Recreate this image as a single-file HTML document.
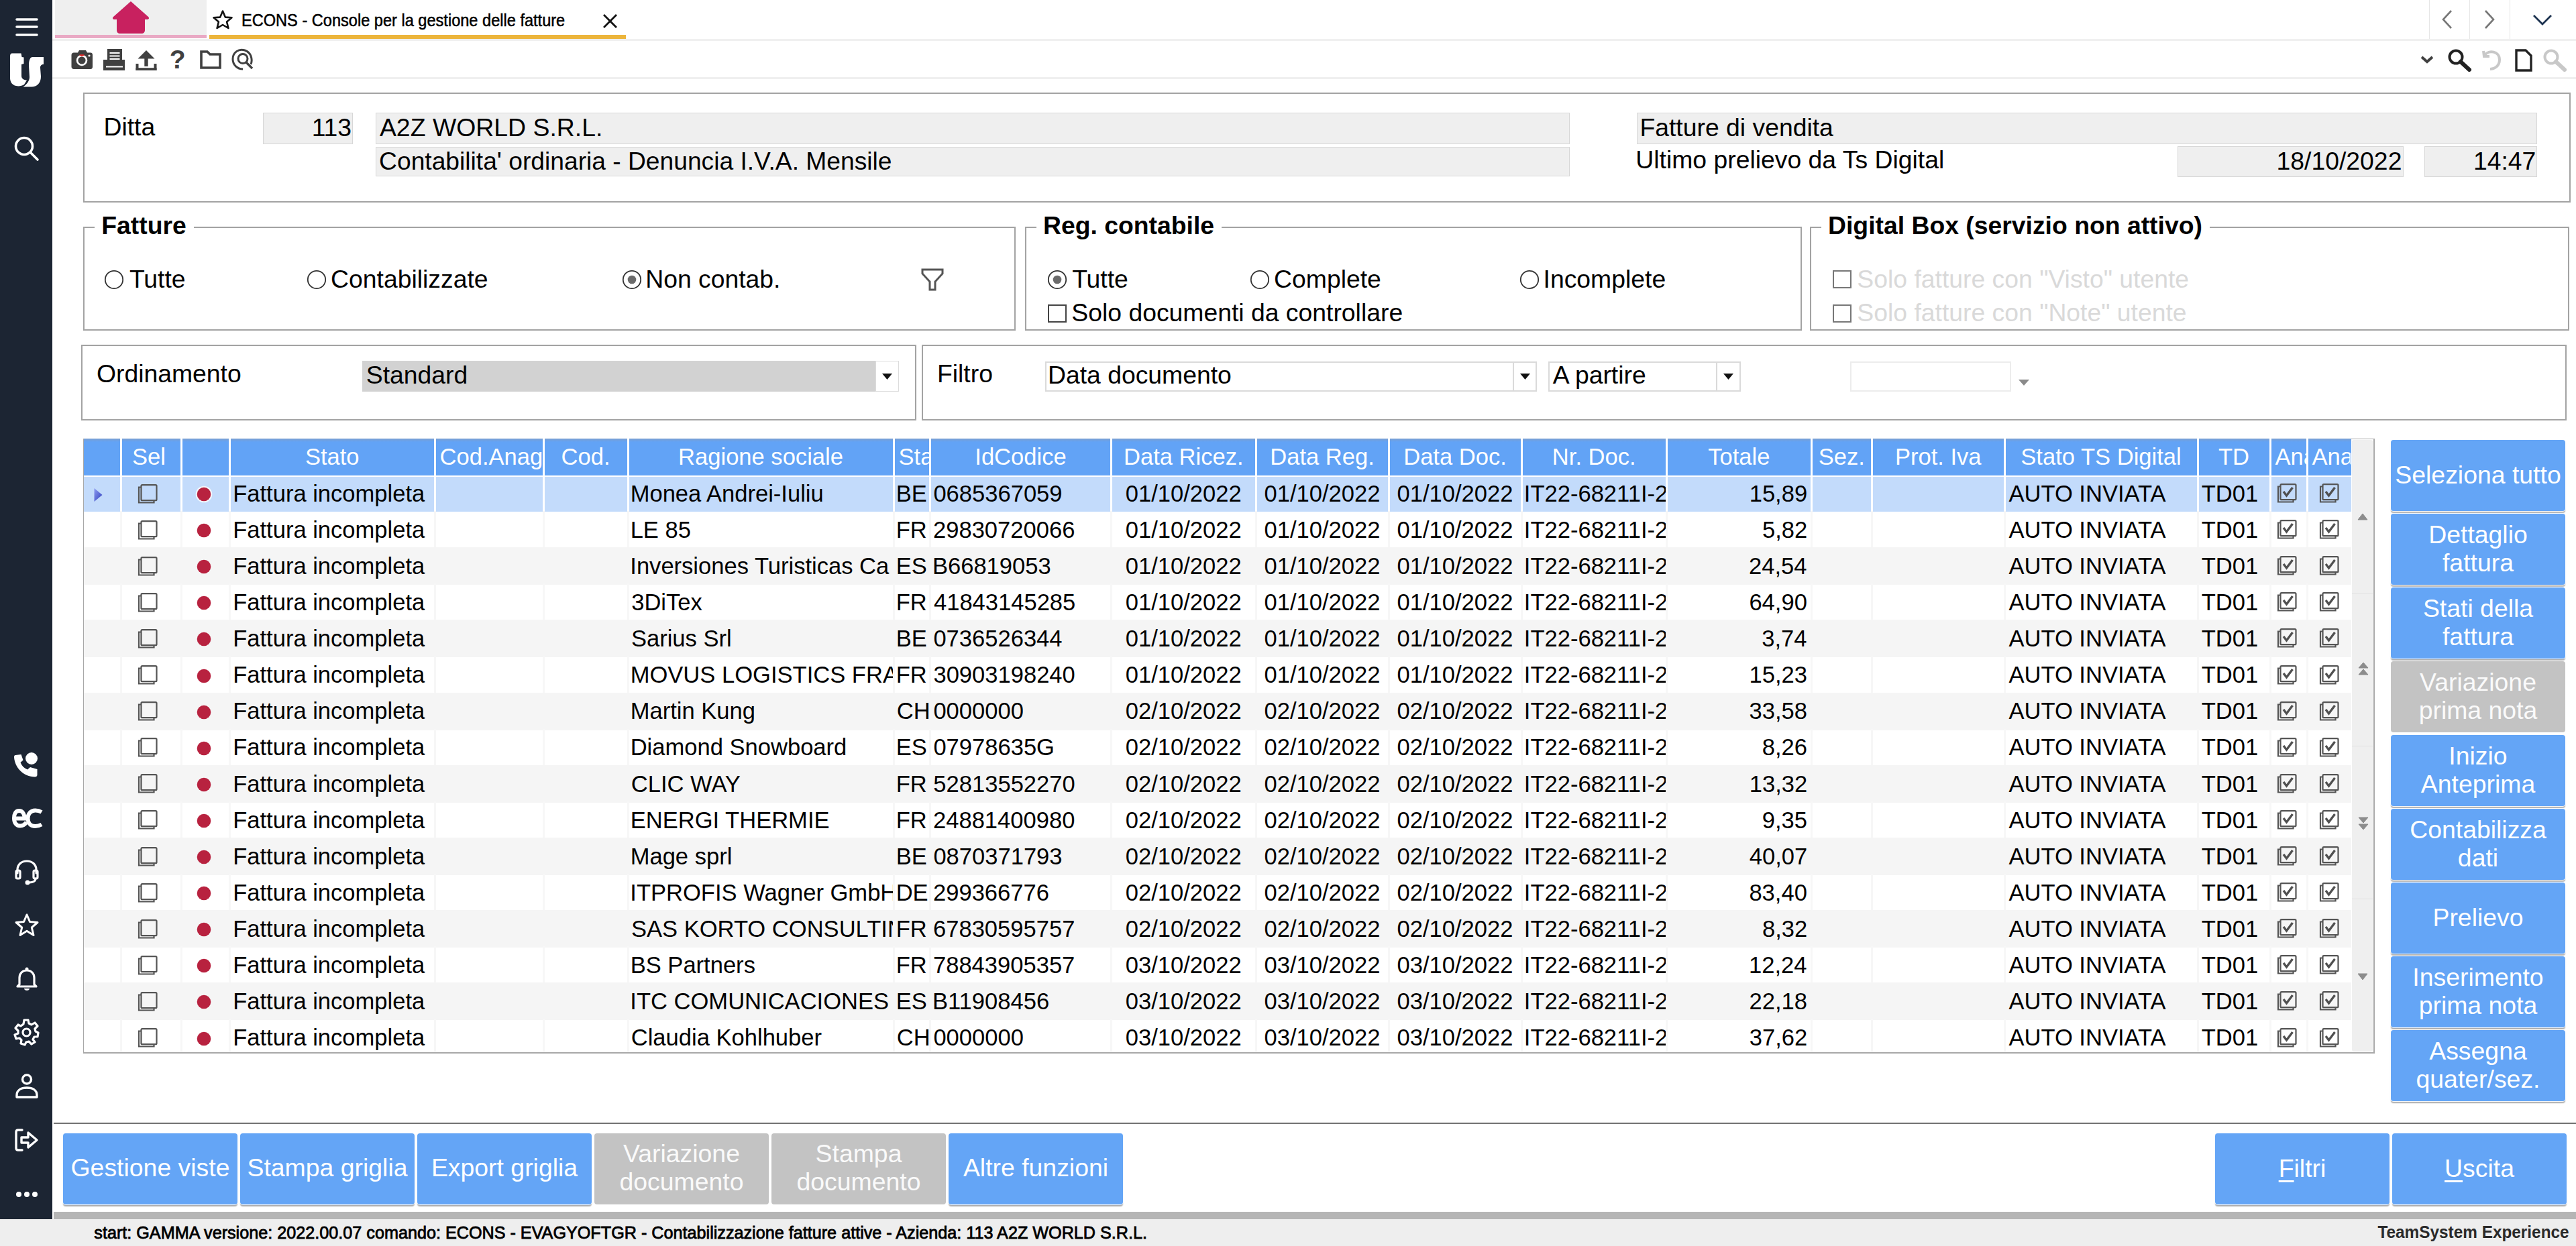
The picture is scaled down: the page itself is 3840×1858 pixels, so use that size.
<!DOCTYPE html><html><head><meta charset="utf-8"><title>ECONS</title><style>
*{margin:0;padding:0;box-sizing:border-box}
html,body{width:3840px;height:1858px;overflow:hidden;background:#fff;font-family:"Liberation Sans",sans-serif;color:#000}
.a{position:absolute}
.t{white-space:nowrap}
</style></head><body>
<div class="a" style="left:0px;top:0px;width:78px;height:1818px;background:#1c2533"></div>
<svg class="a" style="left:22px;top:24px;" width="36" height="34" viewBox="0 0 36 34"><g stroke="#fff" stroke-width="3.6" stroke-linecap="round"><line x1="3" y1="5" x2="33" y2="5"/><line x1="3" y1="16" x2="33" y2="16"/><line x1="3" y1="28" x2="33" y2="28"/></g></svg>
<svg class="a" style="left:0px;top:60px;" width="80" height="80" viewBox="0 0 80 80"><g fill="#fff"><path d="M18 19.5 L31.5 19.5 L32.5 25 L35.5 25.5 L35.5 35 L32 36 L32 53 C32 57 35 59.5 40 59.5 L36 66 C33 68 28 69 24 68 C18 67 15 62 15 56 L15 24 C15 21 16 19.5 18 19.5 Z"/><path d="M48 25 L65 25 L65 36 C62 36 60 37.5 60 41 L61 54 C61 64 55 69.5 47 69.5 L34.5 69.5 C40.5 65.5 44 60 44 55 L43 38 C43 30 44.5 26 48 25 Z"/></g></svg>
<svg class="a" style="left:20px;top:202px;" width="40" height="40" viewBox="0 0 40 40"><g stroke="#fff" stroke-width="3.6" fill="none" stroke-linecap="round"><circle cx="16" cy="16" r="12.5"/><line x1="25.5" y1="25.5" x2="36" y2="36"/></g></svg>
<svg class="a" style="left:20px;top:1120px;" width="40" height="40" viewBox="0 0 40 40"><g fill="#fff"><path d="M3 6 L11.5 5 L14.5 13.5 L10.5 17 C12.5 22 16 25.5 21 27.5 L25 24 L35.5 27 L35.5 35.5 C35.5 37.5 34 38.5 32 38.5 C15 38 2 25 1 9 C1 7 1.8 6.2 3 6 Z"/><circle cx="27" cy="11" r="9"/></g></svg>
<svg class="a" style="left:14px;top:1200px;" width="52" height="40" viewBox="0 0 52 40"><g fill="none" stroke="#fff" stroke-width="6"><path d="M8 20.5 L22.5 20.5 C22.5 13 19 9 14.5 9 C9.5 9 7 13.5 7 20 C7 27 10.5 31.5 16 31.5 C20 31.5 23 29.5 25.5 26"/><path d="M48 11 C45 9.2 42 8.5 38.5 8.5 C31.5 8.5 27.5 14 27.5 20.5 C27.5 27 31.5 32 38.5 32 C42 32 45 31.2 48 29.5"/></g></svg>
<svg class="a" style="left:20px;top:1280px;" width="40" height="40" viewBox="0 0 40 40"><g fill="none" stroke="#fff" stroke-width="3.2" stroke-linecap="round"><path d="M6 22 L6 17 C6 9 12 4 20 4 C28 4 34 9 34 17 L34 22"/><rect x="4" y="18" width="6" height="12" rx="2"/><rect x="30" y="18" width="6" height="12" rx="2"/><path d="M33 30 C33 34 29 36 24 36"/></g><circle cx="21" cy="36" r="3.5" fill="#fff"/></svg>
<svg class="a" style="left:20px;top:1360px;" width="40" height="40" viewBox="0 0 40 40"><path d="M20 4 L24.5 14.5 L36 15.5 L27.3 23 L30 34.5 L20 28.3 L10 34.5 L12.7 23 L4 15.5 L15.5 14.5 Z" fill="none" stroke="#fff" stroke-width="3" stroke-linejoin="round"/></svg>
<svg class="a" style="left:20px;top:1439px;" width="40" height="42" viewBox="0 0 40 42"><g fill="none" stroke="#fff" stroke-width="3.2" stroke-linejoin="round"><path d="M9 29 L9 19 C9 12 14 8 20 8 C26 8 31 12 31 19 L31 29 L34 32 L6 32 Z"/></g><circle cx="20" cy="6" r="2.5" fill="#fff"/><path d="M16 35 C16 39 24 39 24 35 Z" fill="#fff"/></svg>
<svg class="a" style="left:19px;top:1519px;" width="42" height="42" viewBox="0 0 42 42"><g fill="none" stroke="#fff" stroke-width="3.2" stroke-linejoin="round"><path d="M17 4 L23 4 L24 9 L28 11 L33 8 L37 13 L33 17 L34 21 L38 23 L37 29 L32 29 L30 33 L33 37 L28 40 L24 36 L20 37 L18 41 L12 39 L13 34 L10 31 L5 32 L3 26 L8 24 L8 20 L4 16 L8 11 L12 13 L16 10 Z" transform="translate(0,-2)"/><circle cx="20.5" cy="20.5" r="5.5"/></g></svg>
<svg class="a" style="left:20px;top:1600px;" width="40" height="40" viewBox="0 0 40 40"><g fill="none" stroke="#fff" stroke-width="3.4"><circle cx="20" cy="9.5" r="6.5"/><path d="M5 36 L5 33 C5 26 11 22 20 22 C29 22 35 26 35 33 L35 36 Z" stroke-linejoin="round"/></g></svg>
<svg class="a" style="left:20px;top:1680px;" width="40" height="40" viewBox="0 0 40 40"><g fill="none" stroke="#fff" stroke-width="3.4" stroke-linejoin="round" stroke-linecap="round"><path d="M13 5 L7 5 C5 5 4 6 4 8 L4 32 C4 34 5 35 7 35 L13 35"/><path d="M12 16 L22 16 L22 9 L35 20 L22 31 L22 24 L12 24 Z"/></g></svg>
<svg class="a" style="left:22px;top:1773px;" width="36" height="16" viewBox="0 0 36 16"><g fill="#fff"><circle cx="6" cy="8" r="4"/><circle cx="18" cy="8" r="4"/><circle cx="30" cy="8" r="4"/></g></svg>
<div class="a" style="left:78px;top:58px;width:3762px;height:3px;background:#f0f0f0"></div>
<div class="a" style="left:82px;top:0px;width:226px;height:57px;background:#efefef"></div>
<div class="a" style="left:82px;top:52px;width:226px;height:5px;background:#e9a9c4"></div>
<svg class="a" style="left:166px;top:0px;" width="58" height="52" viewBox="0 0 58 52"><path d="M29 2 L55 25 C57 27 56 29 53 29 L50 29 L50 45 C50 48 48 50 45 50 L13 50 C10 50 8 48 8 45 L8 29 L5 29 C2 29 1 27 3 25 Z" fill="#c8215f"/></svg>
<div class="a" style="left:312px;top:0px;width:621px;height:57px;background:#fff"></div>
<div class="a" style="left:312px;top:52px;width:621px;height:6px;background:#ecb53c"></div>
<svg class="a" style="left:316px;top:14px;" width="32" height="32" viewBox="0 0 32 32"><path d="M16 2.5 L19.8 11.6 L29.5 12.3 L22.1 18.6 L24.4 28 L16 23 L7.6 28 L9.9 18.6 L2.5 12.3 L12.2 11.6 Z" fill="none" stroke="#111" stroke-width="2.6" stroke-linejoin="round"/></svg>
<div class="a t " style="left:360.45px;top:17.64px;font-size:25px;line-height:25px;transform:scaleX(0.943);transform-origin:0 0;-webkit-text-stroke:0.5px #000;color:#000">ECONS - Console per la gestione delle fatture</div>
<svg class="a" style="left:898px;top:21px;" width="24" height="22" viewBox="0 0 24 22"><g stroke="#111" stroke-width="2.8" stroke-linecap="square"><line x1="3" y1="2" x2="20" y2="19"/><line x1="20" y1="2" x2="3" y2="19"/></g></svg>
<div class="a" style="left:3621px;top:0px;width:1px;height:58px;background:#e6e6e6"></div>
<div class="a" style="left:3681px;top:0px;width:1px;height:58px;background:#e6e6e6"></div>
<div class="a" style="left:3741px;top:0px;width:1px;height:58px;background:#e6e6e6"></div>
<svg class="a" style="left:3636px;top:14px;" width="24" height="32" viewBox="0 0 24 32"><polyline points="18,2 6,15 18,28" fill="none" stroke="#777" stroke-width="2.6"/></svg>
<svg class="a" style="left:3700px;top:14px;" width="24" height="32" viewBox="0 0 24 32"><polyline points="5,2 17,15 5,28" fill="none" stroke="#777" stroke-width="2.6"/></svg>
<svg class="a" style="left:3774px;top:20px;" width="34" height="20" viewBox="0 0 34 20"><polyline points="3,3 16,16 29,3" fill="none" stroke="#1d3350" stroke-width="2.8"/></svg>
<div class="a" style="left:78px;top:115px;width:3762px;height:3px;background:#efefef"></div>
<svg class="a" style="left:104px;top:72px;" width="36" height="34" viewBox="0 0 36 34"><path d="M2.5 10 C2.5 8 4 6.5 6 6.5 L12 6.5 L14 3 L24 3 L26 6.5 L31 6.5 C33 6.5 34 8 34 10 L34 27.5 C34 29.5 33 31 31 31 L6 31 C4 31 2.5 29.5 2.5 27.5 Z" fill="#404040"/><circle cx="18" cy="18" r="8.3" fill="#fff"/><circle cx="18" cy="18" r="5.6" fill="#404040"/><path d="M14 10.5 L18 12 L22 10.5 L21 9.3 L15 9.3 Z" fill="#d22"/><circle cx="29" cy="11" r="1.6" fill="#fff"/></svg>
<svg class="a" style="left:152px;top:72px;" width="36" height="34" viewBox="0 0 36 34"><g fill="#404040"><rect x="8" y="1" width="22" height="22"/><rect x="2" y="17" width="32" height="16"/></g><g fill="#fff"><rect x="11.5" y="6" width="15" height="2"/><rect x="11.5" y="10.5" width="15" height="2"/><rect x="11.5" y="15" width="15" height="2"/><rect x="11.5" y="3.5" width="15" height="14" fill="none" stroke="#fff" stroke-width="0"/><rect x="6" y="26.5" width="25" height="2"/></g></svg>
<svg class="a" style="left:200px;top:72px;" width="36" height="34" viewBox="0 0 36 34"><g fill="#404040"><path d="M18 3 L30.5 15.5 L20.7 15.5 L20.7 27 L15.3 27 L15.3 15.5 L5.5 15.5 Z"/><rect x="2.5" y="23" width="4" height="10"/><rect x="29.5" y="23" width="4" height="10"/><rect x="2.5" y="29.2" width="31" height="3.8"/></g></svg>
<div class="a t " style="left:252.71px;top:68.99px;font-size:39px;line-height:39px;font-weight:bold;color:#404040;">?</div>
<svg class="a" style="left:296px;top:72px;" width="36" height="34" viewBox="0 0 36 34"><path d="M4 5 L13 5 L17 9 L32 9 L32 29 L4 29 Z" fill="none" stroke="#404040" stroke-width="3.6" stroke-linejoin="miter"/></svg>
<svg class="a" style="left:344px;top:72px;" width="36" height="34" viewBox="0 0 36 34"><g fill="none" stroke="#404040" stroke-width="3"><path d="M30 24 C33 16 30 6 21 3 C12 0 3 6 3 16 C3 25 10 31 18 31"/><circle cx="18" cy="15.5" r="7"/><line x1="23" y1="21" x2="32" y2="30" stroke-width="3.4"/></g></svg>
<svg class="a" style="left:3606px;top:80px;" width="24" height="18" viewBox="0 0 24 18"><polyline points="4,5 12,12 20,5" fill="none" stroke="#404040" stroke-width="4"/></svg>
<svg class="a" style="left:3648px;top:72px;" width="38" height="36" viewBox="0 0 38 36"><g stroke="#222" fill="none"><circle cx="13" cy="13" r="9.5" stroke-width="4"/><line x1="20" y1="20" x2="33" y2="32" stroke-width="6" stroke-linecap="round"/></g></svg>
<svg class="a" style="left:3698px;top:72px;" width="36" height="36" viewBox="0 0 36 36"><g fill="none" stroke="#c8c8c8" stroke-width="4"><path d="M6 10 C12 2 28 4 28 17 C28 27 20 31 14 31"/><polyline points="4,4 5,12 13,12"/></g></svg>
<svg class="a" style="left:3748px;top:72px;" width="28" height="36" viewBox="0 0 28 36"><path d="M3 3 L17 3 L25 11 L25 33 L3 33 Z" fill="none" stroke="#222" stroke-width="3.4"/></svg>
<svg class="a" style="left:3790px;top:72px;" width="38" height="36" viewBox="0 0 38 36"><g stroke="#c8c8c8" fill="none"><circle cx="13" cy="13" r="9.5" stroke-width="4"/><line x1="20" y1="20" x2="33" y2="32" stroke-width="6" stroke-linecap="round"/></g></svg>
<div class="a" style="left:124px;top:138px;width:3708px;height:164px;border:2px solid #a3a3a3"></div>
<div class="a t " style="left:154.44px;top:170.88px;font-size:37.35px;line-height:37.35px;">Ditta</div>
<div class="a" style="left:392px;top:168px;width:134px;height:47px;background:#efefef;border:1px solid #d7d7d7"></div>
<div class="a t" style="right:3315.86px;top:171.88px;font-size:37.35px;line-height:37.35px;text-align:right;">113</div>
<div class="a" style="left:560px;top:168px;width:1780px;height:47px;background:#efefef;border:1px solid #d7d7d7"></div>
<div class="a t " style="left:565.93px;top:172.14px;font-size:37.4px;line-height:37.4px;">A2Z WORLD S.R.L.</div>
<div class="a" style="left:560px;top:219px;width:1780px;height:44px;background:#efefef;border:1px solid #d7d7d7"></div>
<div class="a t " style="left:565.11px;top:222.31px;font-size:37.2px;line-height:37.2px;">Contabilita&#x27; ordinaria - Denuncia I.V.A. Mensile</div>
<div class="a" style="left:2440px;top:168px;width:1342px;height:47px;background:#efefef;border:1px solid #d7d7d7"></div>
<div class="a t " style="left:2444.44px;top:172.18px;font-size:37.35px;line-height:37.35px;">Fatture di vendita</div>
<div class="a t " style="left:2438.37px;top:219.68px;font-size:37.35px;line-height:37.35px;">Ultimo prelievo da Ts Digital</div>
<div class="a" style="left:3246px;top:218px;width:337px;height:46px;background:#efefef;border:1px solid #d7d7d7"></div>
<div class="a t" style="right:259.62px;top:222.18px;font-size:37.35px;line-height:37.35px;text-align:right;">18/10/2022</div>
<div class="a" style="left:3614px;top:218px;width:168px;height:46px;background:#efefef;border:1px solid #d7d7d7"></div>
<div class="a t" style="right:59.62px;top:222.18px;font-size:37.35px;line-height:37.35px;text-align:right;">14:47</div>
<div class="a" style="left:124px;top:338px;width:2px;height:155px;background:#a3a3a3"></div>
<div class="a" style="left:1512px;top:338px;width:2px;height:155px;background:#a3a3a3"></div>
<div class="a" style="left:124px;top:491px;width:1390px;height:2px;background:#a3a3a3"></div>
<div class="a" style="left:124px;top:338px;width:17px;height:2px;background:#a3a3a3"></div>
<div class="a" style="left:289px;top:338px;width:1225px;height:2px;background:#a3a3a3"></div>
<div class="a" style="left:1528px;top:338px;width:2px;height:155px;background:#a3a3a3"></div>
<div class="a" style="left:2684px;top:338px;width:2px;height:155px;background:#a3a3a3"></div>
<div class="a" style="left:1528px;top:491px;width:1158px;height:2px;background:#a3a3a3"></div>
<div class="a" style="left:1528px;top:338px;width:17px;height:2px;background:#a3a3a3"></div>
<div class="a" style="left:1821px;top:338px;width:865px;height:2px;background:#a3a3a3"></div>
<div class="a" style="left:2698px;top:338px;width:2px;height:155px;background:#a3a3a3"></div>
<div class="a" style="left:3828px;top:338px;width:2px;height:155px;background:#a3a3a3"></div>
<div class="a" style="left:2698px;top:491px;width:1132px;height:2px;background:#a3a3a3"></div>
<div class="a" style="left:2698px;top:338px;width:17px;height:2px;background:#a3a3a3"></div>
<div class="a" style="left:3294px;top:338px;width:536px;height:2px;background:#a3a3a3"></div>
<div class="a t " style="left:151.25px;top:318.38px;font-size:37.35px;line-height:37.35px;font-weight:bold;">Fatture</div>
<div class="a t " style="left:1555.00px;top:318.38px;font-size:37.35px;line-height:37.35px;font-weight:bold;">Reg. contabile</div>
<div class="a t " style="left:2725.00px;top:318.38px;font-size:37.35px;line-height:37.35px;font-weight:bold;">Digital Box (servizio non attivo)</div>
<svg class="a" style="left:155px;top:401.5px;" width="30" height="30" viewBox="0 0 30 30"><circle cx="15" cy="15" r="13.2" fill="#fff" stroke="#333" stroke-width="1.8"/></svg>
<div class="a t " style="left:192.91px;top:398.38px;font-size:37.35px;line-height:37.35px;">Tutte</div>
<svg class="a" style="left:457px;top:401.5px;" width="30" height="30" viewBox="0 0 30 30"><circle cx="15" cy="15" r="13.2" fill="#fff" stroke="#333" stroke-width="1.8"/></svg>
<div class="a t " style="left:493.10px;top:398.38px;font-size:37.35px;line-height:37.35px;">Contabilizzate</div>
<svg class="a" style="left:927px;top:401.5px;" width="30" height="30" viewBox="0 0 30 30"><circle cx="15" cy="15" r="13.2" fill="#fff" stroke="#333" stroke-width="1.8"/><circle cx="15" cy="15" r="6.3" fill="#6b6b6b"/></svg>
<div class="a t " style="left:962.19px;top:398.38px;font-size:37.35px;line-height:37.35px;">Non contab.</div>
<svg class="a" style="left:1372px;top:399px;" width="36" height="36" viewBox="0 0 36 36"><path d="M3 3 L33 3 L33 9 L22 21 L22 33 L14 33 L14 21 L3 9 Z" fill="#fff" stroke="#555" stroke-width="3" stroke-linejoin="miter"/></svg>
<svg class="a" style="left:1561px;top:401.5px;" width="30" height="30" viewBox="0 0 30 30"><circle cx="15" cy="15" r="13.2" fill="#fff" stroke="#333" stroke-width="1.8"/><circle cx="15" cy="15" r="6.3" fill="#6b6b6b"/></svg>
<div class="a t " style="left:1598.16px;top:398.38px;font-size:37.35px;line-height:37.35px;">Tutte</div>
<svg class="a" style="left:1863px;top:401.5px;" width="30" height="30" viewBox="0 0 30 30"><circle cx="15" cy="15" r="13.2" fill="#fff" stroke="#333" stroke-width="1.8"/></svg>
<div class="a t " style="left:1899.10px;top:398.38px;font-size:37.35px;line-height:37.35px;">Complete</div>
<svg class="a" style="left:2265px;top:401.5px;" width="30" height="30" viewBox="0 0 30 30"><circle cx="15" cy="15" r="13.2" fill="#fff" stroke="#333" stroke-width="1.8"/></svg>
<div class="a t " style="left:2300.55px;top:398.38px;font-size:37.35px;line-height:37.35px;">Incomplete</div>
<div class="a" style="left:1562px;top:454px;width:28px;height:27px;border:2px solid #444;background:#fff"></div>
<div class="a t " style="left:1597.30px;top:447.88px;font-size:37.35px;line-height:37.35px;">Solo documenti da controllare</div>
<div class="a" style="left:2732px;top:403px;width:28px;height:27px;border:2px solid #777;background:#fff"></div>
<div class="a t " style="left:2768.30px;top:398.38px;font-size:37.35px;line-height:37.35px;color:#d9d9d9;">Solo fatture con &quot;Visto&quot; utente</div>
<div class="a" style="left:2732px;top:454px;width:28px;height:27px;border:2px solid #777;background:#fff"></div>
<div class="a t " style="left:2768.30px;top:447.88px;font-size:37.35px;line-height:37.35px;color:#d9d9d9;">Solo fatture con &quot;Note&quot; utente</div>
<div class="a" style="left:121px;top:514px;width:1245px;height:113px;border:2px solid #a3a3a3"></div>
<div class="a" style="left:1374px;top:514px;width:2452px;height:113px;border:2px solid #a3a3a3"></div>
<div class="a t " style="left:143.98px;top:539.38px;font-size:37.35px;line-height:37.35px;">Ordinamento</div>
<div class="a" style="left:540px;top:538px;width:765px;height:46px;background:#d2d2d2"></div>
<div class="a" style="left:1305px;top:538px;width:35px;height:46px;background:#fff;border:1px solid #dcdcdc"></div>
<svg class="a" style="left:1315px;top:557px;" width="15" height="9" viewBox="0 0 15 9"><path d="M0 0 L15 0 L7.5 9 Z" fill="#111"/></svg>
<div class="a t " style="left:545.80px;top:540.88px;font-size:37.35px;line-height:37.35px;">Standard</div>
<div class="a t " style="left:1396.94px;top:539.38px;font-size:37.35px;line-height:37.35px;">Filtro</div>
<div class="a" style="left:1558px;top:539px;width:733px;height:45px;background:#fff;border:2px solid #dadada"></div>
<div class="a" style="left:2255px;top:539px;width:2px;height:45px;background:#dadada"></div>
<svg class="a" style="left:2266px;top:557px;" width="15" height="9" viewBox="0 0 15 9"><path d="M0 0 L15 0 L7.5 9 Z" fill="#111"/></svg>
<div class="a t " style="left:1561.94px;top:540.88px;font-size:37.35px;line-height:37.35px;">Data documento</div>
<div class="a" style="left:2308px;top:539px;width:287px;height:45px;background:#fff;border:2px solid #dadada"></div>
<div class="a" style="left:2558px;top:539px;width:2px;height:45px;background:#dadada"></div>
<svg class="a" style="left:2569px;top:557px;" width="15" height="9" viewBox="0 0 15 9"><path d="M0 0 L15 0 L7.5 9 Z" fill="#111"/></svg>
<div class="a t " style="left:2314.68px;top:540.88px;font-size:37.35px;line-height:37.35px;">A partire</div>
<div class="a" style="left:2758px;top:539px;width:240px;height:45px;background:#fff;border:2px solid #ececec"></div>
<svg class="a" style="left:3009px;top:566px;" width="16" height="9" viewBox="0 0 16 9"><path d="M0 0 L16 0 L8 9 Z" fill="#8a8a8a"/></svg>
<div class="a" style="left:125px;top:654px;width:3380px;height:55px;background:linear-gradient(#7b9fcf 0px,#62a3f6 5px,#62a3f6 100%)"></div>
<div class="a" style="left:178.5px;top:654px;width:3.0px;height:55px;background:#fff"></div>
<div class="a" style="left:268.5px;top:654px;width:3.0px;height:55px;background:#fff"></div>
<div class="a" style="left:341.0px;top:654px;width:3.0px;height:55px;background:#fff"></div>
<div class="a" style="left:646.5px;top:654px;width:3.0px;height:55px;background:#fff"></div>
<div class="a" style="left:808.5px;top:654px;width:3.0px;height:55px;background:#fff"></div>
<div class="a" style="left:934.5px;top:654px;width:3.0px;height:55px;background:#fff"></div>
<div class="a" style="left:1330.5px;top:654px;width:3.0px;height:55px;background:#fff"></div>
<div class="a" style="left:1385.0px;top:654px;width:3.0px;height:55px;background:#fff"></div>
<div class="a" style="left:1655.0px;top:654px;width:3.0px;height:55px;background:#fff"></div>
<div class="a" style="left:1870.5px;top:654px;width:3.0px;height:55px;background:#fff"></div>
<div class="a" style="left:2068.5px;top:654px;width:3.0px;height:55px;background:#fff"></div>
<div class="a" style="left:2266.5px;top:654px;width:3.0px;height:55px;background:#fff"></div>
<div class="a" style="left:2483.0px;top:654px;width:3.0px;height:55px;background:#fff"></div>
<div class="a" style="left:2698.5px;top:654px;width:3.0px;height:55px;background:#fff"></div>
<div class="a" style="left:2789.0px;top:654px;width:3.0px;height:55px;background:#fff"></div>
<div class="a" style="left:2986.5px;top:654px;width:3.0px;height:55px;background:#fff"></div>
<div class="a" style="left:3274.5px;top:654px;width:3.0px;height:55px;background:#fff"></div>
<div class="a" style="left:3382.5px;top:654px;width:3.0px;height:55px;background:#fff"></div>
<div class="a" style="left:3437.5px;top:654px;width:3.0px;height:55px;background:#fff"></div>
<div class="a" style="left:125px;top:709px;width:3380px;height:2px;background:#fff"></div>
<div class="a" style="left:178.5px;top:654px;width:87px;height:55px;overflow:hidden"><div class="a t" style="left:0;top:10.05px;width:87px;text-align:center;font-size:34.55px;line-height:34.55px;color:#fff">Sel</div></div>
<div class="a" style="left:344.0px;top:654px;width:302.5px;height:55px;overflow:hidden"><div class="a t" style="left:0;top:10.05px;width:302.5px;text-align:center;font-size:34.55px;line-height:34.55px;color:#fff">Stato</div></div>
<div class="a" style="left:649.5px;top:654px;width:159px;height:55px;overflow:hidden"><div class="a t" style="left:0;top:10.05px;width:400px;padding-left:6px;text-align:left;font-size:34.55px;line-height:34.55px;color:#fff">Cod.Anag</div></div>
<div class="a" style="left:811.5px;top:654px;width:123px;height:55px;overflow:hidden"><div class="a t" style="left:0;top:10.05px;width:123px;text-align:center;font-size:34.55px;line-height:34.55px;color:#fff">Cod.</div></div>
<div class="a" style="left:937.5px;top:654px;width:393px;height:55px;overflow:hidden"><div class="a t" style="left:0;top:10.05px;width:393px;text-align:center;font-size:34.55px;line-height:34.55px;color:#fff">Ragione sociale</div></div>
<div class="a" style="left:1333.5px;top:654px;width:51.5px;height:55px;overflow:hidden"><div class="a t" style="left:0;top:10.05px;width:400px;padding-left:6px;text-align:left;font-size:34.55px;line-height:34.55px;color:#fff">Stato</div></div>
<div class="a" style="left:1388.0px;top:654px;width:267.0px;height:55px;overflow:hidden"><div class="a t" style="left:0;top:10.05px;width:267.0px;text-align:center;font-size:34.55px;line-height:34.55px;color:#fff">IdCodice</div></div>
<div class="a" style="left:1658.0px;top:654px;width:212.5px;height:55px;overflow:hidden"><div class="a t" style="left:0;top:10.05px;width:212.5px;text-align:center;font-size:34.55px;line-height:34.55px;color:#fff">Data Ricez.</div></div>
<div class="a" style="left:1873.5px;top:654px;width:195px;height:55px;overflow:hidden"><div class="a t" style="left:0;top:10.05px;width:195px;text-align:center;font-size:34.55px;line-height:34.55px;color:#fff">Data Reg.</div></div>
<div class="a" style="left:2071.5px;top:654px;width:195px;height:55px;overflow:hidden"><div class="a t" style="left:0;top:10.05px;width:195px;text-align:center;font-size:34.55px;line-height:34.55px;color:#fff">Data Doc.</div></div>
<div class="a" style="left:2269.5px;top:654px;width:213.5px;height:55px;overflow:hidden"><div class="a t" style="left:0;top:10.05px;width:213.5px;text-align:center;font-size:34.55px;line-height:34.55px;color:#fff">Nr. Doc.</div></div>
<div class="a" style="left:2486.0px;top:654px;width:212.5px;height:55px;overflow:hidden"><div class="a t" style="left:0;top:10.05px;width:212.5px;text-align:center;font-size:34.55px;line-height:34.55px;color:#fff">Totale</div></div>
<div class="a" style="left:2701.5px;top:654px;width:87.5px;height:55px;overflow:hidden"><div class="a t" style="left:0;top:10.05px;width:87.5px;text-align:center;font-size:34.55px;line-height:34.55px;color:#fff">Sez.</div></div>
<div class="a" style="left:2792.0px;top:654px;width:194.5px;height:55px;overflow:hidden"><div class="a t" style="left:0;top:10.05px;width:194.5px;text-align:center;font-size:34.55px;line-height:34.55px;color:#fff">Prot. Iva</div></div>
<div class="a" style="left:2989.5px;top:654px;width:285px;height:55px;overflow:hidden"><div class="a t" style="left:0;top:10.05px;width:285px;text-align:center;font-size:34.55px;line-height:34.55px;color:#fff">Stato TS Digital</div></div>
<div class="a" style="left:3277.5px;top:654px;width:105px;height:55px;overflow:hidden"><div class="a t" style="left:0;top:10.05px;width:105px;text-align:center;font-size:34.55px;line-height:34.55px;color:#fff">TD</div></div>
<div class="a" style="left:3385.5px;top:654px;width:52px;height:55px;overflow:hidden"><div class="a t" style="left:0;top:10.05px;width:400px;padding-left:6px;text-align:left;font-size:34.55px;line-height:34.55px;color:#fff">Ana</div></div>
<div class="a" style="left:3440.5px;top:654px;width:63px;height:55px;overflow:hidden"><div class="a t" style="left:0;top:10.05px;width:400px;padding-left:6px;text-align:left;font-size:34.55px;line-height:34.55px;color:#fff">Ana</div></div>
<div class="a" style="left:0;top:0;width:3840px;height:1569px;overflow:hidden">
<div class="a" style="left:125px;top:711.0px;width:3380px;height:51.5px;background:#c3dbfb"></div>
<div class="a" style="left:178.5px;top:710.0px;width:3.0px;height:54.10000000000002px;background:#fff"></div>
<div class="a" style="left:268.5px;top:710.0px;width:3.0px;height:54.10000000000002px;background:#fff"></div>
<div class="a" style="left:341.0px;top:710.0px;width:3.0px;height:54.10000000000002px;background:#fff"></div>
<div class="a" style="left:646.5px;top:710.0px;width:3.0px;height:54.10000000000002px;background:#fff"></div>
<div class="a" style="left:808.5px;top:710.0px;width:3.0px;height:54.10000000000002px;background:#fff"></div>
<div class="a" style="left:934.5px;top:710.0px;width:3.0px;height:54.10000000000002px;background:#fff"></div>
<div class="a" style="left:1330.5px;top:710.0px;width:3.0px;height:54.10000000000002px;background:#fff"></div>
<div class="a" style="left:1385.0px;top:710.0px;width:3.0px;height:54.10000000000002px;background:#fff"></div>
<div class="a" style="left:1655.0px;top:710.0px;width:3.0px;height:54.10000000000002px;background:#fff"></div>
<div class="a" style="left:1870.5px;top:710.0px;width:3.0px;height:54.10000000000002px;background:#fff"></div>
<div class="a" style="left:2068.5px;top:710.0px;width:3.0px;height:54.10000000000002px;background:#fff"></div>
<div class="a" style="left:2266.5px;top:710.0px;width:3.0px;height:54.10000000000002px;background:#fff"></div>
<div class="a" style="left:2483.0px;top:710.0px;width:3.0px;height:54.10000000000002px;background:#fff"></div>
<div class="a" style="left:2698.5px;top:710.0px;width:3.0px;height:54.10000000000002px;background:#fff"></div>
<div class="a" style="left:2789.0px;top:710.0px;width:3.0px;height:54.10000000000002px;background:#fff"></div>
<div class="a" style="left:2986.5px;top:710.0px;width:3.0px;height:54.10000000000002px;background:#fff"></div>
<div class="a" style="left:3274.5px;top:710.0px;width:3.0px;height:54.10000000000002px;background:#fff"></div>
<div class="a" style="left:3382.5px;top:710.0px;width:3.0px;height:54.10000000000002px;background:#fff"></div>
<div class="a" style="left:3437.5px;top:710.0px;width:3.0px;height:54.10000000000002px;background:#fff"></div>
<svg class="a" style="left:139px;top:727px;" width="15" height="22" viewBox="0 0 15 22"><defs><linearGradient id="ga" x1="0" y1="0" x2="1" y2="1"><stop offset="0" stop-color="#8e9cf0"/><stop offset="1" stop-color="#2f3fbf"/></linearGradient></defs><path d="M1.5 1 L13.5 11 L1.5 21 Z" fill="url(#ga)"/></svg>
<svg class="a" style="left:205px;top:721.5px;" width="30" height="30" viewBox="0 0 30 30"><g fill="none" stroke="#555" stroke-width="2.2"><path d="M5.5 4.5 L2 4.5 L2 27.5 L24.5 27.5 L24.5 24.5"/><rect x="5.5" y="1.2" width="23" height="23" rx="1.5"/></g></svg>
<svg class="a" style="left:291px;top:724.0px;" width="26" height="26" viewBox="0 0 26 26"><circle cx="13" cy="13" r="12.3" fill="#fff" opacity="0.8"/><circle cx="13" cy="13" r="10.3" fill="#b8223f"/></svg>
<div class="a" style="left:344.0px;top:710.00px;width:302.5px;height:54.10px;overflow:hidden"><div class="a t" style="left:3.17px;top:8.75px;font-size:34.55px;line-height:34.55px">Fattura incompleta</div></div>
<div class="a" style="left:937.5px;top:710.00px;width:393px;height:54.10px;overflow:hidden"><div class="a t" style="left:2.17px;top:8.75px;font-size:34.55px;line-height:34.55px">Monea Andrei-Iuliu</div></div>
<div class="a" style="left:1333.5px;top:710.00px;width:51.5px;height:54.10px;overflow:hidden"><div class="a t" style="left:2.17px;top:8.75px;font-size:34.55px;line-height:34.55px">BE</div></div>
<div class="a" style="left:1388.0px;top:710.00px;width:267.0px;height:54.10px;overflow:hidden"><div class="a t" style="left:3.40px;top:8.75px;font-size:34.55px;line-height:34.55px">0685367059</div></div>
<div class="a" style="left:1658.0px;top:710.00px;width:212.5px;height:54.10px;overflow:hidden"><div class="a t" style="left:0;width:212.5px;top:8.75px;font-size:34.55px;line-height:34.55px;text-align:center">01/10/2022</div></div>
<div class="a" style="left:1873.5px;top:710.00px;width:195px;height:54.10px;overflow:hidden"><div class="a t" style="left:0;width:195px;top:8.75px;font-size:34.55px;line-height:34.55px;text-align:center">01/10/2022</div></div>
<div class="a" style="left:2071.5px;top:710.00px;width:195px;height:54.10px;overflow:hidden"><div class="a t" style="left:0;width:195px;top:8.75px;font-size:34.55px;line-height:34.55px;text-align:center">01/10/2022</div></div>
<div class="a" style="left:2269.5px;top:710.00px;width:213.5px;height:54.10px;overflow:hidden"><div class="a t" style="left:2.31px;top:8.75px;font-size:34.55px;line-height:34.55px">IT22-68211I-2022</div></div>
<div class="a" style="left:2486.0px;top:710.00px;width:212.5px;height:54.10px;overflow:hidden"><div class="a t" style="right:4.36px;top:8.75px;font-size:34.55px;line-height:34.55px;text-align:right">15,89</div></div>
<div class="a" style="left:2989.5px;top:710.00px;width:285px;height:54.10px;overflow:hidden"><div class="a t" style="left:4.93px;top:8.75px;font-size:34.55px;line-height:34.55px">AUTO INVIATA</div></div>
<div class="a" style="left:3277.5px;top:710.00px;width:105px;height:54.10px;overflow:hidden"><div class="a t" style="left:4.22px;top:8.75px;font-size:34.55px;line-height:34.55px">TD01</div></div>
<svg class="a" style="left:3394px;top:721.0px;" width="30" height="30" viewBox="0 0 30 30"><g fill="none" stroke="#555" stroke-width="2.2"><path d="M5.5 4.5 L2 4.5 L2 27.5 L24.5 27.5 L24.5 24.5"/><rect x="5.5" y="1.2" width="23" height="23" rx="1.5"/></g><polyline points="10,12 14.5,18 23.5,6" fill="none" stroke="#505050" stroke-width="3.4" stroke-linejoin="miter"/></svg>
<svg class="a" style="left:3457px;top:721.0px;" width="30" height="30" viewBox="0 0 30 30"><g fill="none" stroke="#555" stroke-width="2.2"><path d="M5.5 4.5 L2 4.5 L2 27.5 L24.5 27.5 L24.5 24.5"/><rect x="5.5" y="1.2" width="23" height="23" rx="1.5"/></g><polyline points="10,12 14.5,18 23.5,6" fill="none" stroke="#505050" stroke-width="3.4" stroke-linejoin="miter"/></svg>
<div class="a" style="left:178.5px;top:762.1px;width:3.0px;height:56.10000000000002px;background:#f7f7f7"></div>
<div class="a" style="left:268.5px;top:762.1px;width:3.0px;height:56.10000000000002px;background:#f7f7f7"></div>
<div class="a" style="left:341.0px;top:762.1px;width:3.0px;height:56.10000000000002px;background:#f7f7f7"></div>
<div class="a" style="left:646.5px;top:762.1px;width:3.0px;height:56.10000000000002px;background:#f7f7f7"></div>
<div class="a" style="left:808.5px;top:762.1px;width:3.0px;height:56.10000000000002px;background:#f7f7f7"></div>
<div class="a" style="left:934.5px;top:762.1px;width:3.0px;height:56.10000000000002px;background:#f7f7f7"></div>
<div class="a" style="left:1330.5px;top:762.1px;width:3.0px;height:56.10000000000002px;background:#f7f7f7"></div>
<div class="a" style="left:1385.0px;top:762.1px;width:3.0px;height:56.10000000000002px;background:#f7f7f7"></div>
<div class="a" style="left:1655.0px;top:762.1px;width:3.0px;height:56.10000000000002px;background:#f7f7f7"></div>
<div class="a" style="left:1870.5px;top:762.1px;width:3.0px;height:56.10000000000002px;background:#f7f7f7"></div>
<div class="a" style="left:2068.5px;top:762.1px;width:3.0px;height:56.10000000000002px;background:#f7f7f7"></div>
<div class="a" style="left:2266.5px;top:762.1px;width:3.0px;height:56.10000000000002px;background:#f7f7f7"></div>
<div class="a" style="left:2483.0px;top:762.1px;width:3.0px;height:56.10000000000002px;background:#f7f7f7"></div>
<div class="a" style="left:2698.5px;top:762.1px;width:3.0px;height:56.10000000000002px;background:#f7f7f7"></div>
<div class="a" style="left:2789.0px;top:762.1px;width:3.0px;height:56.10000000000002px;background:#f7f7f7"></div>
<div class="a" style="left:2986.5px;top:762.1px;width:3.0px;height:56.10000000000002px;background:#f7f7f7"></div>
<div class="a" style="left:3274.5px;top:762.1px;width:3.0px;height:56.10000000000002px;background:#f7f7f7"></div>
<div class="a" style="left:3382.5px;top:762.1px;width:3.0px;height:56.10000000000002px;background:#f7f7f7"></div>
<div class="a" style="left:3437.5px;top:762.1px;width:3.0px;height:56.10000000000002px;background:#f7f7f7"></div>
<svg class="a" style="left:205px;top:775.6px;" width="30" height="30" viewBox="0 0 30 30"><g fill="none" stroke="#555" stroke-width="2.2"><path d="M5.5 4.5 L2 4.5 L2 27.5 L24.5 27.5 L24.5 24.5"/><rect x="5.5" y="1.2" width="23" height="23" rx="1.5"/></g></svg>
<svg class="a" style="left:291px;top:778.1px;" width="26" height="26" viewBox="0 0 26 26"><circle cx="13" cy="13" r="10.3" fill="#b8223f"/></svg>
<div class="a" style="left:344.0px;top:764.10px;width:302.5px;height:54.10px;overflow:hidden"><div class="a t" style="left:3.17px;top:8.75px;font-size:34.55px;line-height:34.55px">Fattura incompleta</div></div>
<div class="a" style="left:937.5px;top:764.10px;width:393px;height:54.10px;overflow:hidden"><div class="a t" style="left:2.17px;top:8.75px;font-size:34.55px;line-height:34.55px">LE 85</div></div>
<div class="a" style="left:1333.5px;top:764.10px;width:51.5px;height:54.10px;overflow:hidden"><div class="a t" style="left:2.17px;top:8.75px;font-size:34.55px;line-height:34.55px">FR</div></div>
<div class="a" style="left:1388.0px;top:764.10px;width:267.0px;height:54.10px;overflow:hidden"><div class="a t" style="left:3.01px;top:8.75px;font-size:34.55px;line-height:34.55px">29830720066</div></div>
<div class="a" style="left:1658.0px;top:764.10px;width:212.5px;height:54.10px;overflow:hidden"><div class="a t" style="left:0;width:212.5px;top:8.75px;font-size:34.55px;line-height:34.55px;text-align:center">01/10/2022</div></div>
<div class="a" style="left:1873.5px;top:764.10px;width:195px;height:54.10px;overflow:hidden"><div class="a t" style="left:0;width:195px;top:8.75px;font-size:34.55px;line-height:34.55px;text-align:center">01/10/2022</div></div>
<div class="a" style="left:2071.5px;top:764.10px;width:195px;height:54.10px;overflow:hidden"><div class="a t" style="left:0;width:195px;top:8.75px;font-size:34.55px;line-height:34.55px;text-align:center">01/10/2022</div></div>
<div class="a" style="left:2269.5px;top:764.10px;width:213.5px;height:54.10px;overflow:hidden"><div class="a t" style="left:2.31px;top:8.75px;font-size:34.55px;line-height:34.55px">IT22-68211I-2022</div></div>
<div class="a" style="left:2486.0px;top:764.10px;width:212.5px;height:54.10px;overflow:hidden"><div class="a t" style="right:4.26px;top:8.75px;font-size:34.55px;line-height:34.55px;text-align:right">5,82</div></div>
<div class="a" style="left:2989.5px;top:764.10px;width:285px;height:54.10px;overflow:hidden"><div class="a t" style="left:4.93px;top:8.75px;font-size:34.55px;line-height:34.55px">AUTO INVIATA</div></div>
<div class="a" style="left:3277.5px;top:764.10px;width:105px;height:54.10px;overflow:hidden"><div class="a t" style="left:4.22px;top:8.75px;font-size:34.55px;line-height:34.55px">TD01</div></div>
<svg class="a" style="left:3394px;top:775.1px;" width="30" height="30" viewBox="0 0 30 30"><g fill="none" stroke="#555" stroke-width="2.2"><path d="M5.5 4.5 L2 4.5 L2 27.5 L24.5 27.5 L24.5 24.5"/><rect x="5.5" y="1.2" width="23" height="23" rx="1.5"/></g><polyline points="10,12 14.5,18 23.5,6" fill="none" stroke="#505050" stroke-width="3.4" stroke-linejoin="miter"/></svg>
<svg class="a" style="left:3457px;top:775.1px;" width="30" height="30" viewBox="0 0 30 30"><g fill="none" stroke="#555" stroke-width="2.2"><path d="M5.5 4.5 L2 4.5 L2 27.5 L24.5 27.5 L24.5 24.5"/><rect x="5.5" y="1.2" width="23" height="23" rx="1.5"/></g><polyline points="10,12 14.5,18 23.5,6" fill="none" stroke="#505050" stroke-width="3.4" stroke-linejoin="miter"/></svg>
<div class="a" style="left:125px;top:816.2px;width:3380px;height:56.09999999999991px;background:#f5f5f5"></div>
<svg class="a" style="left:205px;top:829.7px;" width="30" height="30" viewBox="0 0 30 30"><g fill="none" stroke="#555" stroke-width="2.2"><path d="M5.5 4.5 L2 4.5 L2 27.5 L24.5 27.5 L24.5 24.5"/><rect x="5.5" y="1.2" width="23" height="23" rx="1.5"/></g></svg>
<svg class="a" style="left:291px;top:832.2px;" width="26" height="26" viewBox="0 0 26 26"><circle cx="13" cy="13" r="10.3" fill="#b8223f"/></svg>
<div class="a" style="left:344.0px;top:818.20px;width:302.5px;height:54.10px;overflow:hidden"><div class="a t" style="left:3.17px;top:8.75px;font-size:34.55px;line-height:34.55px">Fattura incompleta</div></div>
<div class="a" style="left:937.5px;top:818.20px;width:393px;height:54.10px;overflow:hidden"><div class="a t" style="left:1.81px;top:8.75px;font-size:34.55px;line-height:34.55px">Inversiones Turisticas Ca</div></div>
<div class="a" style="left:1333.5px;top:818.20px;width:51.5px;height:54.10px;overflow:hidden"><div class="a t" style="left:2.17px;top:8.75px;font-size:34.55px;line-height:34.55px">ES</div></div>
<div class="a" style="left:1388.0px;top:818.20px;width:267.0px;height:54.10px;overflow:hidden"><div class="a t" style="left:1.92px;top:8.75px;font-size:34.55px;line-height:34.55px">B66819053</div></div>
<div class="a" style="left:1658.0px;top:818.20px;width:212.5px;height:54.10px;overflow:hidden"><div class="a t" style="left:0;width:212.5px;top:8.75px;font-size:34.55px;line-height:34.55px;text-align:center">01/10/2022</div></div>
<div class="a" style="left:1873.5px;top:818.20px;width:195px;height:54.10px;overflow:hidden"><div class="a t" style="left:0;width:195px;top:8.75px;font-size:34.55px;line-height:34.55px;text-align:center">01/10/2022</div></div>
<div class="a" style="left:2071.5px;top:818.20px;width:195px;height:54.10px;overflow:hidden"><div class="a t" style="left:0;width:195px;top:8.75px;font-size:34.55px;line-height:34.55px;text-align:center">01/10/2022</div></div>
<div class="a" style="left:2269.5px;top:818.20px;width:213.5px;height:54.10px;overflow:hidden"><div class="a t" style="left:2.31px;top:8.75px;font-size:34.55px;line-height:34.55px">IT22-68211I-2022</div></div>
<div class="a" style="left:2486.0px;top:818.20px;width:212.5px;height:54.10px;overflow:hidden"><div class="a t" style="right:4.99px;top:8.75px;font-size:34.55px;line-height:34.55px;text-align:right">24,54</div></div>
<div class="a" style="left:2989.5px;top:818.20px;width:285px;height:54.10px;overflow:hidden"><div class="a t" style="left:4.93px;top:8.75px;font-size:34.55px;line-height:34.55px">AUTO INVIATA</div></div>
<div class="a" style="left:3277.5px;top:818.20px;width:105px;height:54.10px;overflow:hidden"><div class="a t" style="left:4.22px;top:8.75px;font-size:34.55px;line-height:34.55px">TD01</div></div>
<svg class="a" style="left:3394px;top:829.2px;" width="30" height="30" viewBox="0 0 30 30"><g fill="none" stroke="#555" stroke-width="2.2"><path d="M5.5 4.5 L2 4.5 L2 27.5 L24.5 27.5 L24.5 24.5"/><rect x="5.5" y="1.2" width="23" height="23" rx="1.5"/></g><polyline points="10,12 14.5,18 23.5,6" fill="none" stroke="#505050" stroke-width="3.4" stroke-linejoin="miter"/></svg>
<svg class="a" style="left:3457px;top:829.2px;" width="30" height="30" viewBox="0 0 30 30"><g fill="none" stroke="#555" stroke-width="2.2"><path d="M5.5 4.5 L2 4.5 L2 27.5 L24.5 27.5 L24.5 24.5"/><rect x="5.5" y="1.2" width="23" height="23" rx="1.5"/></g><polyline points="10,12 14.5,18 23.5,6" fill="none" stroke="#505050" stroke-width="3.4" stroke-linejoin="miter"/></svg>
<div class="a" style="left:178.5px;top:870.3px;width:3.0px;height:56.10000000000002px;background:#f7f7f7"></div>
<div class="a" style="left:268.5px;top:870.3px;width:3.0px;height:56.10000000000002px;background:#f7f7f7"></div>
<div class="a" style="left:341.0px;top:870.3px;width:3.0px;height:56.10000000000002px;background:#f7f7f7"></div>
<div class="a" style="left:646.5px;top:870.3px;width:3.0px;height:56.10000000000002px;background:#f7f7f7"></div>
<div class="a" style="left:808.5px;top:870.3px;width:3.0px;height:56.10000000000002px;background:#f7f7f7"></div>
<div class="a" style="left:934.5px;top:870.3px;width:3.0px;height:56.10000000000002px;background:#f7f7f7"></div>
<div class="a" style="left:1330.5px;top:870.3px;width:3.0px;height:56.10000000000002px;background:#f7f7f7"></div>
<div class="a" style="left:1385.0px;top:870.3px;width:3.0px;height:56.10000000000002px;background:#f7f7f7"></div>
<div class="a" style="left:1655.0px;top:870.3px;width:3.0px;height:56.10000000000002px;background:#f7f7f7"></div>
<div class="a" style="left:1870.5px;top:870.3px;width:3.0px;height:56.10000000000002px;background:#f7f7f7"></div>
<div class="a" style="left:2068.5px;top:870.3px;width:3.0px;height:56.10000000000002px;background:#f7f7f7"></div>
<div class="a" style="left:2266.5px;top:870.3px;width:3.0px;height:56.10000000000002px;background:#f7f7f7"></div>
<div class="a" style="left:2483.0px;top:870.3px;width:3.0px;height:56.10000000000002px;background:#f7f7f7"></div>
<div class="a" style="left:2698.5px;top:870.3px;width:3.0px;height:56.10000000000002px;background:#f7f7f7"></div>
<div class="a" style="left:2789.0px;top:870.3px;width:3.0px;height:56.10000000000002px;background:#f7f7f7"></div>
<div class="a" style="left:2986.5px;top:870.3px;width:3.0px;height:56.10000000000002px;background:#f7f7f7"></div>
<div class="a" style="left:3274.5px;top:870.3px;width:3.0px;height:56.10000000000002px;background:#f7f7f7"></div>
<div class="a" style="left:3382.5px;top:870.3px;width:3.0px;height:56.10000000000002px;background:#f7f7f7"></div>
<div class="a" style="left:3437.5px;top:870.3px;width:3.0px;height:56.10000000000002px;background:#f7f7f7"></div>
<svg class="a" style="left:205px;top:883.8px;" width="30" height="30" viewBox="0 0 30 30"><g fill="none" stroke="#555" stroke-width="2.2"><path d="M5.5 4.5 L2 4.5 L2 27.5 L24.5 27.5 L24.5 24.5"/><rect x="5.5" y="1.2" width="23" height="23" rx="1.5"/></g></svg>
<svg class="a" style="left:291px;top:886.3px;" width="26" height="26" viewBox="0 0 26 26"><circle cx="13" cy="13" r="10.3" fill="#b8223f"/></svg>
<div class="a" style="left:344.0px;top:872.30px;width:302.5px;height:54.10px;overflow:hidden"><div class="a t" style="left:3.17px;top:8.75px;font-size:34.55px;line-height:34.55px">Fattura incompleta</div></div>
<div class="a" style="left:937.5px;top:872.30px;width:393px;height:54.10px;overflow:hidden"><div class="a t" style="left:3.68px;top:8.75px;font-size:34.55px;line-height:34.55px">3DiTex</div></div>
<div class="a" style="left:1333.5px;top:872.30px;width:51.5px;height:54.10px;overflow:hidden"><div class="a t" style="left:2.17px;top:8.75px;font-size:34.55px;line-height:34.55px">FR</div></div>
<div class="a" style="left:1388.0px;top:872.30px;width:267.0px;height:54.10px;overflow:hidden"><div class="a t" style="left:3.96px;top:8.75px;font-size:34.55px;line-height:34.55px">41843145285</div></div>
<div class="a" style="left:1658.0px;top:872.30px;width:212.5px;height:54.10px;overflow:hidden"><div class="a t" style="left:0;width:212.5px;top:8.75px;font-size:34.55px;line-height:34.55px;text-align:center">01/10/2022</div></div>
<div class="a" style="left:1873.5px;top:872.30px;width:195px;height:54.10px;overflow:hidden"><div class="a t" style="left:0;width:195px;top:8.75px;font-size:34.55px;line-height:34.55px;text-align:center">01/10/2022</div></div>
<div class="a" style="left:2071.5px;top:872.30px;width:195px;height:54.10px;overflow:hidden"><div class="a t" style="left:0;width:195px;top:8.75px;font-size:34.55px;line-height:34.55px;text-align:center">01/10/2022</div></div>
<div class="a" style="left:2269.5px;top:872.30px;width:213.5px;height:54.10px;overflow:hidden"><div class="a t" style="left:2.31px;top:8.75px;font-size:34.55px;line-height:34.55px">IT22-68211I-2022</div></div>
<div class="a" style="left:2486.0px;top:872.30px;width:212.5px;height:54.10px;overflow:hidden"><div class="a t" style="right:4.65px;top:8.75px;font-size:34.55px;line-height:34.55px;text-align:right">64,90</div></div>
<div class="a" style="left:2989.5px;top:872.30px;width:285px;height:54.10px;overflow:hidden"><div class="a t" style="left:4.93px;top:8.75px;font-size:34.55px;line-height:34.55px">AUTO INVIATA</div></div>
<div class="a" style="left:3277.5px;top:872.30px;width:105px;height:54.10px;overflow:hidden"><div class="a t" style="left:4.22px;top:8.75px;font-size:34.55px;line-height:34.55px">TD01</div></div>
<svg class="a" style="left:3394px;top:883.3px;" width="30" height="30" viewBox="0 0 30 30"><g fill="none" stroke="#555" stroke-width="2.2"><path d="M5.5 4.5 L2 4.5 L2 27.5 L24.5 27.5 L24.5 24.5"/><rect x="5.5" y="1.2" width="23" height="23" rx="1.5"/></g><polyline points="10,12 14.5,18 23.5,6" fill="none" stroke="#505050" stroke-width="3.4" stroke-linejoin="miter"/></svg>
<svg class="a" style="left:3457px;top:883.3px;" width="30" height="30" viewBox="0 0 30 30"><g fill="none" stroke="#555" stroke-width="2.2"><path d="M5.5 4.5 L2 4.5 L2 27.5 L24.5 27.5 L24.5 24.5"/><rect x="5.5" y="1.2" width="23" height="23" rx="1.5"/></g><polyline points="10,12 14.5,18 23.5,6" fill="none" stroke="#505050" stroke-width="3.4" stroke-linejoin="miter"/></svg>
<div class="a" style="left:125px;top:924.4px;width:3380px;height:56.10000000000002px;background:#f5f5f5"></div>
<svg class="a" style="left:205px;top:937.9px;" width="30" height="30" viewBox="0 0 30 30"><g fill="none" stroke="#555" stroke-width="2.2"><path d="M5.5 4.5 L2 4.5 L2 27.5 L24.5 27.5 L24.5 24.5"/><rect x="5.5" y="1.2" width="23" height="23" rx="1.5"/></g></svg>
<svg class="a" style="left:291px;top:940.4px;" width="26" height="26" viewBox="0 0 26 26"><circle cx="13" cy="13" r="10.3" fill="#b8223f"/></svg>
<div class="a" style="left:344.0px;top:926.40px;width:302.5px;height:54.10px;overflow:hidden"><div class="a t" style="left:3.17px;top:8.75px;font-size:34.55px;line-height:34.55px">Fattura incompleta</div></div>
<div class="a" style="left:937.5px;top:926.40px;width:393px;height:54.10px;overflow:hidden"><div class="a t" style="left:3.43px;top:8.75px;font-size:34.55px;line-height:34.55px">Sarius Srl</div></div>
<div class="a" style="left:1333.5px;top:926.40px;width:51.5px;height:54.10px;overflow:hidden"><div class="a t" style="left:2.17px;top:8.75px;font-size:34.55px;line-height:34.55px">BE</div></div>
<div class="a" style="left:1388.0px;top:926.40px;width:267.0px;height:54.10px;overflow:hidden"><div class="a t" style="left:3.40px;top:8.75px;font-size:34.55px;line-height:34.55px">0736526344</div></div>
<div class="a" style="left:1658.0px;top:926.40px;width:212.5px;height:54.10px;overflow:hidden"><div class="a t" style="left:0;width:212.5px;top:8.75px;font-size:34.55px;line-height:34.55px;text-align:center">01/10/2022</div></div>
<div class="a" style="left:1873.5px;top:926.40px;width:195px;height:54.10px;overflow:hidden"><div class="a t" style="left:0;width:195px;top:8.75px;font-size:34.55px;line-height:34.55px;text-align:center">01/10/2022</div></div>
<div class="a" style="left:2071.5px;top:926.40px;width:195px;height:54.10px;overflow:hidden"><div class="a t" style="left:0;width:195px;top:8.75px;font-size:34.55px;line-height:34.55px;text-align:center">01/10/2022</div></div>
<div class="a" style="left:2269.5px;top:926.40px;width:213.5px;height:54.10px;overflow:hidden"><div class="a t" style="left:2.31px;top:8.75px;font-size:34.55px;line-height:34.55px">IT22-68211I-2022</div></div>
<div class="a" style="left:2486.0px;top:926.40px;width:212.5px;height:54.10px;overflow:hidden"><div class="a t" style="right:4.99px;top:8.75px;font-size:34.55px;line-height:34.55px;text-align:right">3,74</div></div>
<div class="a" style="left:2989.5px;top:926.40px;width:285px;height:54.10px;overflow:hidden"><div class="a t" style="left:4.93px;top:8.75px;font-size:34.55px;line-height:34.55px">AUTO INVIATA</div></div>
<div class="a" style="left:3277.5px;top:926.40px;width:105px;height:54.10px;overflow:hidden"><div class="a t" style="left:4.22px;top:8.75px;font-size:34.55px;line-height:34.55px">TD01</div></div>
<svg class="a" style="left:3394px;top:937.4px;" width="30" height="30" viewBox="0 0 30 30"><g fill="none" stroke="#555" stroke-width="2.2"><path d="M5.5 4.5 L2 4.5 L2 27.5 L24.5 27.5 L24.5 24.5"/><rect x="5.5" y="1.2" width="23" height="23" rx="1.5"/></g><polyline points="10,12 14.5,18 23.5,6" fill="none" stroke="#505050" stroke-width="3.4" stroke-linejoin="miter"/></svg>
<svg class="a" style="left:3457px;top:937.4px;" width="30" height="30" viewBox="0 0 30 30"><g fill="none" stroke="#555" stroke-width="2.2"><path d="M5.5 4.5 L2 4.5 L2 27.5 L24.5 27.5 L24.5 24.5"/><rect x="5.5" y="1.2" width="23" height="23" rx="1.5"/></g><polyline points="10,12 14.5,18 23.5,6" fill="none" stroke="#505050" stroke-width="3.4" stroke-linejoin="miter"/></svg>
<div class="a" style="left:178.5px;top:978.5px;width:3.0px;height:56.09999999999991px;background:#f7f7f7"></div>
<div class="a" style="left:268.5px;top:978.5px;width:3.0px;height:56.09999999999991px;background:#f7f7f7"></div>
<div class="a" style="left:341.0px;top:978.5px;width:3.0px;height:56.09999999999991px;background:#f7f7f7"></div>
<div class="a" style="left:646.5px;top:978.5px;width:3.0px;height:56.09999999999991px;background:#f7f7f7"></div>
<div class="a" style="left:808.5px;top:978.5px;width:3.0px;height:56.09999999999991px;background:#f7f7f7"></div>
<div class="a" style="left:934.5px;top:978.5px;width:3.0px;height:56.09999999999991px;background:#f7f7f7"></div>
<div class="a" style="left:1330.5px;top:978.5px;width:3.0px;height:56.09999999999991px;background:#f7f7f7"></div>
<div class="a" style="left:1385.0px;top:978.5px;width:3.0px;height:56.09999999999991px;background:#f7f7f7"></div>
<div class="a" style="left:1655.0px;top:978.5px;width:3.0px;height:56.09999999999991px;background:#f7f7f7"></div>
<div class="a" style="left:1870.5px;top:978.5px;width:3.0px;height:56.09999999999991px;background:#f7f7f7"></div>
<div class="a" style="left:2068.5px;top:978.5px;width:3.0px;height:56.09999999999991px;background:#f7f7f7"></div>
<div class="a" style="left:2266.5px;top:978.5px;width:3.0px;height:56.09999999999991px;background:#f7f7f7"></div>
<div class="a" style="left:2483.0px;top:978.5px;width:3.0px;height:56.09999999999991px;background:#f7f7f7"></div>
<div class="a" style="left:2698.5px;top:978.5px;width:3.0px;height:56.09999999999991px;background:#f7f7f7"></div>
<div class="a" style="left:2789.0px;top:978.5px;width:3.0px;height:56.09999999999991px;background:#f7f7f7"></div>
<div class="a" style="left:2986.5px;top:978.5px;width:3.0px;height:56.09999999999991px;background:#f7f7f7"></div>
<div class="a" style="left:3274.5px;top:978.5px;width:3.0px;height:56.09999999999991px;background:#f7f7f7"></div>
<div class="a" style="left:3382.5px;top:978.5px;width:3.0px;height:56.09999999999991px;background:#f7f7f7"></div>
<div class="a" style="left:3437.5px;top:978.5px;width:3.0px;height:56.09999999999991px;background:#f7f7f7"></div>
<svg class="a" style="left:205px;top:992.0px;" width="30" height="30" viewBox="0 0 30 30"><g fill="none" stroke="#555" stroke-width="2.2"><path d="M5.5 4.5 L2 4.5 L2 27.5 L24.5 27.5 L24.5 24.5"/><rect x="5.5" y="1.2" width="23" height="23" rx="1.5"/></g></svg>
<svg class="a" style="left:291px;top:994.5px;" width="26" height="26" viewBox="0 0 26 26"><circle cx="13" cy="13" r="10.3" fill="#b8223f"/></svg>
<div class="a" style="left:344.0px;top:980.50px;width:302.5px;height:54.10px;overflow:hidden"><div class="a t" style="left:3.17px;top:8.75px;font-size:34.55px;line-height:34.55px">Fattura incompleta</div></div>
<div class="a" style="left:937.5px;top:980.50px;width:393px;height:54.10px;overflow:hidden"><div class="a t" style="left:2.17px;top:8.75px;font-size:34.55px;line-height:34.55px">MOVUS LOGISTICS FRANCE</div></div>
<div class="a" style="left:1333.5px;top:980.50px;width:51.5px;height:54.10px;overflow:hidden"><div class="a t" style="left:2.17px;top:8.75px;font-size:34.55px;line-height:34.55px">FR</div></div>
<div class="a" style="left:1388.0px;top:980.50px;width:267.0px;height:54.10px;overflow:hidden"><div class="a t" style="left:3.43px;top:8.75px;font-size:34.55px;line-height:34.55px">30903198240</div></div>
<div class="a" style="left:1658.0px;top:980.50px;width:212.5px;height:54.10px;overflow:hidden"><div class="a t" style="left:0;width:212.5px;top:8.75px;font-size:34.55px;line-height:34.55px;text-align:center">01/10/2022</div></div>
<div class="a" style="left:1873.5px;top:980.50px;width:195px;height:54.10px;overflow:hidden"><div class="a t" style="left:0;width:195px;top:8.75px;font-size:34.55px;line-height:34.55px;text-align:center">01/10/2022</div></div>
<div class="a" style="left:2071.5px;top:980.50px;width:195px;height:54.10px;overflow:hidden"><div class="a t" style="left:0;width:195px;top:8.75px;font-size:34.55px;line-height:34.55px;text-align:center">01/10/2022</div></div>
<div class="a" style="left:2269.5px;top:980.50px;width:213.5px;height:54.10px;overflow:hidden"><div class="a t" style="left:2.31px;top:8.75px;font-size:34.55px;line-height:34.55px">IT22-68211I-2022</div></div>
<div class="a" style="left:2486.0px;top:980.50px;width:212.5px;height:54.10px;overflow:hidden"><div class="a t" style="right:4.48px;top:8.75px;font-size:34.55px;line-height:34.55px;text-align:right">15,23</div></div>
<div class="a" style="left:2989.5px;top:980.50px;width:285px;height:54.10px;overflow:hidden"><div class="a t" style="left:4.93px;top:8.75px;font-size:34.55px;line-height:34.55px">AUTO INVIATA</div></div>
<div class="a" style="left:3277.5px;top:980.50px;width:105px;height:54.10px;overflow:hidden"><div class="a t" style="left:4.22px;top:8.75px;font-size:34.55px;line-height:34.55px">TD01</div></div>
<svg class="a" style="left:3394px;top:991.5px;" width="30" height="30" viewBox="0 0 30 30"><g fill="none" stroke="#555" stroke-width="2.2"><path d="M5.5 4.5 L2 4.5 L2 27.5 L24.5 27.5 L24.5 24.5"/><rect x="5.5" y="1.2" width="23" height="23" rx="1.5"/></g><polyline points="10,12 14.5,18 23.5,6" fill="none" stroke="#505050" stroke-width="3.4" stroke-linejoin="miter"/></svg>
<svg class="a" style="left:3457px;top:991.5px;" width="30" height="30" viewBox="0 0 30 30"><g fill="none" stroke="#555" stroke-width="2.2"><path d="M5.5 4.5 L2 4.5 L2 27.5 L24.5 27.5 L24.5 24.5"/><rect x="5.5" y="1.2" width="23" height="23" rx="1.5"/></g><polyline points="10,12 14.5,18 23.5,6" fill="none" stroke="#505050" stroke-width="3.4" stroke-linejoin="miter"/></svg>
<div class="a" style="left:125px;top:1032.6px;width:3380px;height:56.100000000000136px;background:#f5f5f5"></div>
<svg class="a" style="left:205px;top:1046.1px;" width="30" height="30" viewBox="0 0 30 30"><g fill="none" stroke="#555" stroke-width="2.2"><path d="M5.5 4.5 L2 4.5 L2 27.5 L24.5 27.5 L24.5 24.5"/><rect x="5.5" y="1.2" width="23" height="23" rx="1.5"/></g></svg>
<svg class="a" style="left:291px;top:1048.6px;" width="26" height="26" viewBox="0 0 26 26"><circle cx="13" cy="13" r="10.3" fill="#b8223f"/></svg>
<div class="a" style="left:344.0px;top:1034.60px;width:302.5px;height:54.10px;overflow:hidden"><div class="a t" style="left:3.17px;top:8.75px;font-size:34.55px;line-height:34.55px">Fattura incompleta</div></div>
<div class="a" style="left:937.5px;top:1034.60px;width:393px;height:54.10px;overflow:hidden"><div class="a t" style="left:2.17px;top:8.75px;font-size:34.55px;line-height:34.55px">Martin Kung</div></div>
<div class="a" style="left:1333.5px;top:1034.60px;width:51.5px;height:54.10px;overflow:hidden"><div class="a t" style="left:3.25px;top:8.75px;font-size:34.55px;line-height:34.55px">CH</div></div>
<div class="a" style="left:1388.0px;top:1034.60px;width:267.0px;height:54.10px;overflow:hidden"><div class="a t" style="left:3.40px;top:8.75px;font-size:34.55px;line-height:34.55px">0000000</div></div>
<div class="a" style="left:1658.0px;top:1034.60px;width:212.5px;height:54.10px;overflow:hidden"><div class="a t" style="left:0;width:212.5px;top:8.75px;font-size:34.55px;line-height:34.55px;text-align:center">02/10/2022</div></div>
<div class="a" style="left:1873.5px;top:1034.60px;width:195px;height:54.10px;overflow:hidden"><div class="a t" style="left:0;width:195px;top:8.75px;font-size:34.55px;line-height:34.55px;text-align:center">02/10/2022</div></div>
<div class="a" style="left:2071.5px;top:1034.60px;width:195px;height:54.10px;overflow:hidden"><div class="a t" style="left:0;width:195px;top:8.75px;font-size:34.55px;line-height:34.55px;text-align:center">02/10/2022</div></div>
<div class="a" style="left:2269.5px;top:1034.60px;width:213.5px;height:54.10px;overflow:hidden"><div class="a t" style="left:2.31px;top:8.75px;font-size:34.55px;line-height:34.55px">IT22-68211I-2022</div></div>
<div class="a" style="left:2486.0px;top:1034.60px;width:212.5px;height:54.10px;overflow:hidden"><div class="a t" style="right:4.50px;top:8.75px;font-size:34.55px;line-height:34.55px;text-align:right">33,58</div></div>
<div class="a" style="left:2989.5px;top:1034.60px;width:285px;height:54.10px;overflow:hidden"><div class="a t" style="left:4.93px;top:8.75px;font-size:34.55px;line-height:34.55px">AUTO INVIATA</div></div>
<div class="a" style="left:3277.5px;top:1034.60px;width:105px;height:54.10px;overflow:hidden"><div class="a t" style="left:4.22px;top:8.75px;font-size:34.55px;line-height:34.55px">TD01</div></div>
<svg class="a" style="left:3394px;top:1045.6px;" width="30" height="30" viewBox="0 0 30 30"><g fill="none" stroke="#555" stroke-width="2.2"><path d="M5.5 4.5 L2 4.5 L2 27.5 L24.5 27.5 L24.5 24.5"/><rect x="5.5" y="1.2" width="23" height="23" rx="1.5"/></g><polyline points="10,12 14.5,18 23.5,6" fill="none" stroke="#505050" stroke-width="3.4" stroke-linejoin="miter"/></svg>
<svg class="a" style="left:3457px;top:1045.6px;" width="30" height="30" viewBox="0 0 30 30"><g fill="none" stroke="#555" stroke-width="2.2"><path d="M5.5 4.5 L2 4.5 L2 27.5 L24.5 27.5 L24.5 24.5"/><rect x="5.5" y="1.2" width="23" height="23" rx="1.5"/></g><polyline points="10,12 14.5,18 23.5,6" fill="none" stroke="#505050" stroke-width="3.4" stroke-linejoin="miter"/></svg>
<div class="a" style="left:178.5px;top:1086.7px;width:3.0px;height:56.09999999999991px;background:#f7f7f7"></div>
<div class="a" style="left:268.5px;top:1086.7px;width:3.0px;height:56.09999999999991px;background:#f7f7f7"></div>
<div class="a" style="left:341.0px;top:1086.7px;width:3.0px;height:56.09999999999991px;background:#f7f7f7"></div>
<div class="a" style="left:646.5px;top:1086.7px;width:3.0px;height:56.09999999999991px;background:#f7f7f7"></div>
<div class="a" style="left:808.5px;top:1086.7px;width:3.0px;height:56.09999999999991px;background:#f7f7f7"></div>
<div class="a" style="left:934.5px;top:1086.7px;width:3.0px;height:56.09999999999991px;background:#f7f7f7"></div>
<div class="a" style="left:1330.5px;top:1086.7px;width:3.0px;height:56.09999999999991px;background:#f7f7f7"></div>
<div class="a" style="left:1385.0px;top:1086.7px;width:3.0px;height:56.09999999999991px;background:#f7f7f7"></div>
<div class="a" style="left:1655.0px;top:1086.7px;width:3.0px;height:56.09999999999991px;background:#f7f7f7"></div>
<div class="a" style="left:1870.5px;top:1086.7px;width:3.0px;height:56.09999999999991px;background:#f7f7f7"></div>
<div class="a" style="left:2068.5px;top:1086.7px;width:3.0px;height:56.09999999999991px;background:#f7f7f7"></div>
<div class="a" style="left:2266.5px;top:1086.7px;width:3.0px;height:56.09999999999991px;background:#f7f7f7"></div>
<div class="a" style="left:2483.0px;top:1086.7px;width:3.0px;height:56.09999999999991px;background:#f7f7f7"></div>
<div class="a" style="left:2698.5px;top:1086.7px;width:3.0px;height:56.09999999999991px;background:#f7f7f7"></div>
<div class="a" style="left:2789.0px;top:1086.7px;width:3.0px;height:56.09999999999991px;background:#f7f7f7"></div>
<div class="a" style="left:2986.5px;top:1086.7px;width:3.0px;height:56.09999999999991px;background:#f7f7f7"></div>
<div class="a" style="left:3274.5px;top:1086.7px;width:3.0px;height:56.09999999999991px;background:#f7f7f7"></div>
<div class="a" style="left:3382.5px;top:1086.7px;width:3.0px;height:56.09999999999991px;background:#f7f7f7"></div>
<div class="a" style="left:3437.5px;top:1086.7px;width:3.0px;height:56.09999999999991px;background:#f7f7f7"></div>
<svg class="a" style="left:205px;top:1100.2px;" width="30" height="30" viewBox="0 0 30 30"><g fill="none" stroke="#555" stroke-width="2.2"><path d="M5.5 4.5 L2 4.5 L2 27.5 L24.5 27.5 L24.5 24.5"/><rect x="5.5" y="1.2" width="23" height="23" rx="1.5"/></g></svg>
<svg class="a" style="left:291px;top:1102.7px;" width="26" height="26" viewBox="0 0 26 26"><circle cx="13" cy="13" r="10.3" fill="#b8223f"/></svg>
<div class="a" style="left:344.0px;top:1088.70px;width:302.5px;height:54.10px;overflow:hidden"><div class="a t" style="left:3.17px;top:8.75px;font-size:34.55px;line-height:34.55px">Fattura incompleta</div></div>
<div class="a" style="left:937.5px;top:1088.70px;width:393px;height:54.10px;overflow:hidden"><div class="a t" style="left:2.17px;top:8.75px;font-size:34.55px;line-height:34.55px">Diamond Snowboard</div></div>
<div class="a" style="left:1333.5px;top:1088.70px;width:51.5px;height:54.10px;overflow:hidden"><div class="a t" style="left:2.17px;top:8.75px;font-size:34.55px;line-height:34.55px">ES</div></div>
<div class="a" style="left:1388.0px;top:1088.70px;width:267.0px;height:54.10px;overflow:hidden"><div class="a t" style="left:3.40px;top:8.75px;font-size:34.55px;line-height:34.55px">07978635G</div></div>
<div class="a" style="left:1658.0px;top:1088.70px;width:212.5px;height:54.10px;overflow:hidden"><div class="a t" style="left:0;width:212.5px;top:8.75px;font-size:34.55px;line-height:34.55px;text-align:center">02/10/2022</div></div>
<div class="a" style="left:1873.5px;top:1088.70px;width:195px;height:54.10px;overflow:hidden"><div class="a t" style="left:0;width:195px;top:8.75px;font-size:34.55px;line-height:34.55px;text-align:center">02/10/2022</div></div>
<div class="a" style="left:2071.5px;top:1088.70px;width:195px;height:54.10px;overflow:hidden"><div class="a t" style="left:0;width:195px;top:8.75px;font-size:34.55px;line-height:34.55px;text-align:center">02/10/2022</div></div>
<div class="a" style="left:2269.5px;top:1088.70px;width:213.5px;height:54.10px;overflow:hidden"><div class="a t" style="left:2.31px;top:8.75px;font-size:34.55px;line-height:34.55px">IT22-68211I-2022</div></div>
<div class="a" style="left:2486.0px;top:1088.70px;width:212.5px;height:54.10px;overflow:hidden"><div class="a t" style="right:4.48px;top:8.75px;font-size:34.55px;line-height:34.55px;text-align:right">8,26</div></div>
<div class="a" style="left:2989.5px;top:1088.70px;width:285px;height:54.10px;overflow:hidden"><div class="a t" style="left:4.93px;top:8.75px;font-size:34.55px;line-height:34.55px">AUTO INVIATA</div></div>
<div class="a" style="left:3277.5px;top:1088.70px;width:105px;height:54.10px;overflow:hidden"><div class="a t" style="left:4.22px;top:8.75px;font-size:34.55px;line-height:34.55px">TD01</div></div>
<svg class="a" style="left:3394px;top:1099.7px;" width="30" height="30" viewBox="0 0 30 30"><g fill="none" stroke="#555" stroke-width="2.2"><path d="M5.5 4.5 L2 4.5 L2 27.5 L24.5 27.5 L24.5 24.5"/><rect x="5.5" y="1.2" width="23" height="23" rx="1.5"/></g><polyline points="10,12 14.5,18 23.5,6" fill="none" stroke="#505050" stroke-width="3.4" stroke-linejoin="miter"/></svg>
<svg class="a" style="left:3457px;top:1099.7px;" width="30" height="30" viewBox="0 0 30 30"><g fill="none" stroke="#555" stroke-width="2.2"><path d="M5.5 4.5 L2 4.5 L2 27.5 L24.5 27.5 L24.5 24.5"/><rect x="5.5" y="1.2" width="23" height="23" rx="1.5"/></g><polyline points="10,12 14.5,18 23.5,6" fill="none" stroke="#505050" stroke-width="3.4" stroke-linejoin="miter"/></svg>
<div class="a" style="left:125px;top:1140.8px;width:3380px;height:56.100000000000136px;background:#f5f5f5"></div>
<svg class="a" style="left:205px;top:1154.3px;" width="30" height="30" viewBox="0 0 30 30"><g fill="none" stroke="#555" stroke-width="2.2"><path d="M5.5 4.5 L2 4.5 L2 27.5 L24.5 27.5 L24.5 24.5"/><rect x="5.5" y="1.2" width="23" height="23" rx="1.5"/></g></svg>
<svg class="a" style="left:291px;top:1156.8px;" width="26" height="26" viewBox="0 0 26 26"><circle cx="13" cy="13" r="10.3" fill="#b8223f"/></svg>
<div class="a" style="left:344.0px;top:1142.80px;width:302.5px;height:54.10px;overflow:hidden"><div class="a t" style="left:3.17px;top:8.75px;font-size:34.55px;line-height:34.55px">Fattura incompleta</div></div>
<div class="a" style="left:937.5px;top:1142.80px;width:393px;height:54.10px;overflow:hidden"><div class="a t" style="left:3.25px;top:8.75px;font-size:34.55px;line-height:34.55px">CLIC WAY</div></div>
<div class="a" style="left:1333.5px;top:1142.80px;width:51.5px;height:54.10px;overflow:hidden"><div class="a t" style="left:2.17px;top:8.75px;font-size:34.55px;line-height:34.55px">FR</div></div>
<div class="a" style="left:1388.0px;top:1142.80px;width:267.0px;height:54.10px;overflow:hidden"><div class="a t" style="left:3.37px;top:8.75px;font-size:34.55px;line-height:34.55px">52813552270</div></div>
<div class="a" style="left:1658.0px;top:1142.80px;width:212.5px;height:54.10px;overflow:hidden"><div class="a t" style="left:0;width:212.5px;top:8.75px;font-size:34.55px;line-height:34.55px;text-align:center">02/10/2022</div></div>
<div class="a" style="left:1873.5px;top:1142.80px;width:195px;height:54.10px;overflow:hidden"><div class="a t" style="left:0;width:195px;top:8.75px;font-size:34.55px;line-height:34.55px;text-align:center">02/10/2022</div></div>
<div class="a" style="left:2071.5px;top:1142.80px;width:195px;height:54.10px;overflow:hidden"><div class="a t" style="left:0;width:195px;top:8.75px;font-size:34.55px;line-height:34.55px;text-align:center">02/10/2022</div></div>
<div class="a" style="left:2269.5px;top:1142.80px;width:213.5px;height:54.10px;overflow:hidden"><div class="a t" style="left:2.31px;top:8.75px;font-size:34.55px;line-height:34.55px">IT22-68211I-2022</div></div>
<div class="a" style="left:2486.0px;top:1142.80px;width:212.5px;height:54.10px;overflow:hidden"><div class="a t" style="right:4.26px;top:8.75px;font-size:34.55px;line-height:34.55px;text-align:right">13,32</div></div>
<div class="a" style="left:2989.5px;top:1142.80px;width:285px;height:54.10px;overflow:hidden"><div class="a t" style="left:4.93px;top:8.75px;font-size:34.55px;line-height:34.55px">AUTO INVIATA</div></div>
<div class="a" style="left:3277.5px;top:1142.80px;width:105px;height:54.10px;overflow:hidden"><div class="a t" style="left:4.22px;top:8.75px;font-size:34.55px;line-height:34.55px">TD01</div></div>
<svg class="a" style="left:3394px;top:1153.8px;" width="30" height="30" viewBox="0 0 30 30"><g fill="none" stroke="#555" stroke-width="2.2"><path d="M5.5 4.5 L2 4.5 L2 27.5 L24.5 27.5 L24.5 24.5"/><rect x="5.5" y="1.2" width="23" height="23" rx="1.5"/></g><polyline points="10,12 14.5,18 23.5,6" fill="none" stroke="#505050" stroke-width="3.4" stroke-linejoin="miter"/></svg>
<svg class="a" style="left:3457px;top:1153.8px;" width="30" height="30" viewBox="0 0 30 30"><g fill="none" stroke="#555" stroke-width="2.2"><path d="M5.5 4.5 L2 4.5 L2 27.5 L24.5 27.5 L24.5 24.5"/><rect x="5.5" y="1.2" width="23" height="23" rx="1.5"/></g><polyline points="10,12 14.5,18 23.5,6" fill="none" stroke="#505050" stroke-width="3.4" stroke-linejoin="miter"/></svg>
<div class="a" style="left:178.5px;top:1194.9px;width:3.0px;height:56.09999999999991px;background:#f7f7f7"></div>
<div class="a" style="left:268.5px;top:1194.9px;width:3.0px;height:56.09999999999991px;background:#f7f7f7"></div>
<div class="a" style="left:341.0px;top:1194.9px;width:3.0px;height:56.09999999999991px;background:#f7f7f7"></div>
<div class="a" style="left:646.5px;top:1194.9px;width:3.0px;height:56.09999999999991px;background:#f7f7f7"></div>
<div class="a" style="left:808.5px;top:1194.9px;width:3.0px;height:56.09999999999991px;background:#f7f7f7"></div>
<div class="a" style="left:934.5px;top:1194.9px;width:3.0px;height:56.09999999999991px;background:#f7f7f7"></div>
<div class="a" style="left:1330.5px;top:1194.9px;width:3.0px;height:56.09999999999991px;background:#f7f7f7"></div>
<div class="a" style="left:1385.0px;top:1194.9px;width:3.0px;height:56.09999999999991px;background:#f7f7f7"></div>
<div class="a" style="left:1655.0px;top:1194.9px;width:3.0px;height:56.09999999999991px;background:#f7f7f7"></div>
<div class="a" style="left:1870.5px;top:1194.9px;width:3.0px;height:56.09999999999991px;background:#f7f7f7"></div>
<div class="a" style="left:2068.5px;top:1194.9px;width:3.0px;height:56.09999999999991px;background:#f7f7f7"></div>
<div class="a" style="left:2266.5px;top:1194.9px;width:3.0px;height:56.09999999999991px;background:#f7f7f7"></div>
<div class="a" style="left:2483.0px;top:1194.9px;width:3.0px;height:56.09999999999991px;background:#f7f7f7"></div>
<div class="a" style="left:2698.5px;top:1194.9px;width:3.0px;height:56.09999999999991px;background:#f7f7f7"></div>
<div class="a" style="left:2789.0px;top:1194.9px;width:3.0px;height:56.09999999999991px;background:#f7f7f7"></div>
<div class="a" style="left:2986.5px;top:1194.9px;width:3.0px;height:56.09999999999991px;background:#f7f7f7"></div>
<div class="a" style="left:3274.5px;top:1194.9px;width:3.0px;height:56.09999999999991px;background:#f7f7f7"></div>
<div class="a" style="left:3382.5px;top:1194.9px;width:3.0px;height:56.09999999999991px;background:#f7f7f7"></div>
<div class="a" style="left:3437.5px;top:1194.9px;width:3.0px;height:56.09999999999991px;background:#f7f7f7"></div>
<svg class="a" style="left:205px;top:1208.4px;" width="30" height="30" viewBox="0 0 30 30"><g fill="none" stroke="#555" stroke-width="2.2"><path d="M5.5 4.5 L2 4.5 L2 27.5 L24.5 27.5 L24.5 24.5"/><rect x="5.5" y="1.2" width="23" height="23" rx="1.5"/></g></svg>
<svg class="a" style="left:291px;top:1210.9px;" width="26" height="26" viewBox="0 0 26 26"><circle cx="13" cy="13" r="10.3" fill="#b8223f"/></svg>
<div class="a" style="left:344.0px;top:1196.90px;width:302.5px;height:54.10px;overflow:hidden"><div class="a t" style="left:3.17px;top:8.75px;font-size:34.55px;line-height:34.55px">Fattura incompleta</div></div>
<div class="a" style="left:937.5px;top:1196.90px;width:393px;height:54.10px;overflow:hidden"><div class="a t" style="left:2.17px;top:8.75px;font-size:34.55px;line-height:34.55px">ENERGI THERMIE</div></div>
<div class="a" style="left:1333.5px;top:1196.90px;width:51.5px;height:54.10px;overflow:hidden"><div class="a t" style="left:2.17px;top:8.75px;font-size:34.55px;line-height:34.55px">FR</div></div>
<div class="a" style="left:1388.0px;top:1196.90px;width:267.0px;height:54.10px;overflow:hidden"><div class="a t" style="left:3.01px;top:8.75px;font-size:34.55px;line-height:34.55px">24881400980</div></div>
<div class="a" style="left:1658.0px;top:1196.90px;width:212.5px;height:54.10px;overflow:hidden"><div class="a t" style="left:0;width:212.5px;top:8.75px;font-size:34.55px;line-height:34.55px;text-align:center">02/10/2022</div></div>
<div class="a" style="left:1873.5px;top:1196.90px;width:195px;height:54.10px;overflow:hidden"><div class="a t" style="left:0;width:195px;top:8.75px;font-size:34.55px;line-height:34.55px;text-align:center">02/10/2022</div></div>
<div class="a" style="left:2071.5px;top:1196.90px;width:195px;height:54.10px;overflow:hidden"><div class="a t" style="left:0;width:195px;top:8.75px;font-size:34.55px;line-height:34.55px;text-align:center">02/10/2022</div></div>
<div class="a" style="left:2269.5px;top:1196.90px;width:213.5px;height:54.10px;overflow:hidden"><div class="a t" style="left:2.31px;top:8.75px;font-size:34.55px;line-height:34.55px">IT22-68211I-2022</div></div>
<div class="a" style="left:2486.0px;top:1196.90px;width:212.5px;height:54.10px;overflow:hidden"><div class="a t" style="right:4.55px;top:8.75px;font-size:34.55px;line-height:34.55px;text-align:right">9,35</div></div>
<div class="a" style="left:2989.5px;top:1196.90px;width:285px;height:54.10px;overflow:hidden"><div class="a t" style="left:4.93px;top:8.75px;font-size:34.55px;line-height:34.55px">AUTO INVIATA</div></div>
<div class="a" style="left:3277.5px;top:1196.90px;width:105px;height:54.10px;overflow:hidden"><div class="a t" style="left:4.22px;top:8.75px;font-size:34.55px;line-height:34.55px">TD01</div></div>
<svg class="a" style="left:3394px;top:1207.9px;" width="30" height="30" viewBox="0 0 30 30"><g fill="none" stroke="#555" stroke-width="2.2"><path d="M5.5 4.5 L2 4.5 L2 27.5 L24.5 27.5 L24.5 24.5"/><rect x="5.5" y="1.2" width="23" height="23" rx="1.5"/></g><polyline points="10,12 14.5,18 23.5,6" fill="none" stroke="#505050" stroke-width="3.4" stroke-linejoin="miter"/></svg>
<svg class="a" style="left:3457px;top:1207.9px;" width="30" height="30" viewBox="0 0 30 30"><g fill="none" stroke="#555" stroke-width="2.2"><path d="M5.5 4.5 L2 4.5 L2 27.5 L24.5 27.5 L24.5 24.5"/><rect x="5.5" y="1.2" width="23" height="23" rx="1.5"/></g><polyline points="10,12 14.5,18 23.5,6" fill="none" stroke="#505050" stroke-width="3.4" stroke-linejoin="miter"/></svg>
<div class="a" style="left:125px;top:1249.0px;width:3380px;height:56.09999999999991px;background:#f5f5f5"></div>
<svg class="a" style="left:205px;top:1262.5px;" width="30" height="30" viewBox="0 0 30 30"><g fill="none" stroke="#555" stroke-width="2.2"><path d="M5.5 4.5 L2 4.5 L2 27.5 L24.5 27.5 L24.5 24.5"/><rect x="5.5" y="1.2" width="23" height="23" rx="1.5"/></g></svg>
<svg class="a" style="left:291px;top:1265.0px;" width="26" height="26" viewBox="0 0 26 26"><circle cx="13" cy="13" r="10.3" fill="#b8223f"/></svg>
<div class="a" style="left:344.0px;top:1251.00px;width:302.5px;height:54.10px;overflow:hidden"><div class="a t" style="left:3.17px;top:8.75px;font-size:34.55px;line-height:34.55px">Fattura incompleta</div></div>
<div class="a" style="left:937.5px;top:1251.00px;width:393px;height:54.10px;overflow:hidden"><div class="a t" style="left:2.17px;top:8.75px;font-size:34.55px;line-height:34.55px">Mage sprl</div></div>
<div class="a" style="left:1333.5px;top:1251.00px;width:51.5px;height:54.10px;overflow:hidden"><div class="a t" style="left:2.17px;top:8.75px;font-size:34.55px;line-height:34.55px">BE</div></div>
<div class="a" style="left:1388.0px;top:1251.00px;width:267.0px;height:54.10px;overflow:hidden"><div class="a t" style="left:3.40px;top:8.75px;font-size:34.55px;line-height:34.55px">0870371793</div></div>
<div class="a" style="left:1658.0px;top:1251.00px;width:212.5px;height:54.10px;overflow:hidden"><div class="a t" style="left:0;width:212.5px;top:8.75px;font-size:34.55px;line-height:34.55px;text-align:center">02/10/2022</div></div>
<div class="a" style="left:1873.5px;top:1251.00px;width:195px;height:54.10px;overflow:hidden"><div class="a t" style="left:0;width:195px;top:8.75px;font-size:34.55px;line-height:34.55px;text-align:center">02/10/2022</div></div>
<div class="a" style="left:2071.5px;top:1251.00px;width:195px;height:54.10px;overflow:hidden"><div class="a t" style="left:0;width:195px;top:8.75px;font-size:34.55px;line-height:34.55px;text-align:center">02/10/2022</div></div>
<div class="a" style="left:2269.5px;top:1251.00px;width:213.5px;height:54.10px;overflow:hidden"><div class="a t" style="left:2.31px;top:8.75px;font-size:34.55px;line-height:34.55px">IT22-68211I-2022</div></div>
<div class="a" style="left:2486.0px;top:1251.00px;width:212.5px;height:54.10px;overflow:hidden"><div class="a t" style="right:4.26px;top:8.75px;font-size:34.55px;line-height:34.55px;text-align:right">40,07</div></div>
<div class="a" style="left:2989.5px;top:1251.00px;width:285px;height:54.10px;overflow:hidden"><div class="a t" style="left:4.93px;top:8.75px;font-size:34.55px;line-height:34.55px">AUTO INVIATA</div></div>
<div class="a" style="left:3277.5px;top:1251.00px;width:105px;height:54.10px;overflow:hidden"><div class="a t" style="left:4.22px;top:8.75px;font-size:34.55px;line-height:34.55px">TD01</div></div>
<svg class="a" style="left:3394px;top:1262.0px;" width="30" height="30" viewBox="0 0 30 30"><g fill="none" stroke="#555" stroke-width="2.2"><path d="M5.5 4.5 L2 4.5 L2 27.5 L24.5 27.5 L24.5 24.5"/><rect x="5.5" y="1.2" width="23" height="23" rx="1.5"/></g><polyline points="10,12 14.5,18 23.5,6" fill="none" stroke="#505050" stroke-width="3.4" stroke-linejoin="miter"/></svg>
<svg class="a" style="left:3457px;top:1262.0px;" width="30" height="30" viewBox="0 0 30 30"><g fill="none" stroke="#555" stroke-width="2.2"><path d="M5.5 4.5 L2 4.5 L2 27.5 L24.5 27.5 L24.5 24.5"/><rect x="5.5" y="1.2" width="23" height="23" rx="1.5"/></g><polyline points="10,12 14.5,18 23.5,6" fill="none" stroke="#505050" stroke-width="3.4" stroke-linejoin="miter"/></svg>
<div class="a" style="left:178.5px;top:1303.1px;width:3.0px;height:56.09999999999991px;background:#f7f7f7"></div>
<div class="a" style="left:268.5px;top:1303.1px;width:3.0px;height:56.09999999999991px;background:#f7f7f7"></div>
<div class="a" style="left:341.0px;top:1303.1px;width:3.0px;height:56.09999999999991px;background:#f7f7f7"></div>
<div class="a" style="left:646.5px;top:1303.1px;width:3.0px;height:56.09999999999991px;background:#f7f7f7"></div>
<div class="a" style="left:808.5px;top:1303.1px;width:3.0px;height:56.09999999999991px;background:#f7f7f7"></div>
<div class="a" style="left:934.5px;top:1303.1px;width:3.0px;height:56.09999999999991px;background:#f7f7f7"></div>
<div class="a" style="left:1330.5px;top:1303.1px;width:3.0px;height:56.09999999999991px;background:#f7f7f7"></div>
<div class="a" style="left:1385.0px;top:1303.1px;width:3.0px;height:56.09999999999991px;background:#f7f7f7"></div>
<div class="a" style="left:1655.0px;top:1303.1px;width:3.0px;height:56.09999999999991px;background:#f7f7f7"></div>
<div class="a" style="left:1870.5px;top:1303.1px;width:3.0px;height:56.09999999999991px;background:#f7f7f7"></div>
<div class="a" style="left:2068.5px;top:1303.1px;width:3.0px;height:56.09999999999991px;background:#f7f7f7"></div>
<div class="a" style="left:2266.5px;top:1303.1px;width:3.0px;height:56.09999999999991px;background:#f7f7f7"></div>
<div class="a" style="left:2483.0px;top:1303.1px;width:3.0px;height:56.09999999999991px;background:#f7f7f7"></div>
<div class="a" style="left:2698.5px;top:1303.1px;width:3.0px;height:56.09999999999991px;background:#f7f7f7"></div>
<div class="a" style="left:2789.0px;top:1303.1px;width:3.0px;height:56.09999999999991px;background:#f7f7f7"></div>
<div class="a" style="left:2986.5px;top:1303.1px;width:3.0px;height:56.09999999999991px;background:#f7f7f7"></div>
<div class="a" style="left:3274.5px;top:1303.1px;width:3.0px;height:56.09999999999991px;background:#f7f7f7"></div>
<div class="a" style="left:3382.5px;top:1303.1px;width:3.0px;height:56.09999999999991px;background:#f7f7f7"></div>
<div class="a" style="left:3437.5px;top:1303.1px;width:3.0px;height:56.09999999999991px;background:#f7f7f7"></div>
<svg class="a" style="left:205px;top:1316.6px;" width="30" height="30" viewBox="0 0 30 30"><g fill="none" stroke="#555" stroke-width="2.2"><path d="M5.5 4.5 L2 4.5 L2 27.5 L24.5 27.5 L24.5 24.5"/><rect x="5.5" y="1.2" width="23" height="23" rx="1.5"/></g></svg>
<svg class="a" style="left:291px;top:1319.1px;" width="26" height="26" viewBox="0 0 26 26"><circle cx="13" cy="13" r="10.3" fill="#b8223f"/></svg>
<div class="a" style="left:344.0px;top:1305.10px;width:302.5px;height:54.10px;overflow:hidden"><div class="a t" style="left:3.17px;top:8.75px;font-size:34.55px;line-height:34.55px">Fattura incompleta</div></div>
<div class="a" style="left:937.5px;top:1305.10px;width:393px;height:54.10px;overflow:hidden"><div class="a t" style="left:1.81px;top:8.75px;font-size:34.55px;line-height:34.55px">ITPROFIS Wagner GmbH</div></div>
<div class="a" style="left:1333.5px;top:1305.10px;width:51.5px;height:54.10px;overflow:hidden"><div class="a t" style="left:2.17px;top:8.75px;font-size:34.55px;line-height:34.55px">DE</div></div>
<div class="a" style="left:1388.0px;top:1305.10px;width:267.0px;height:54.10px;overflow:hidden"><div class="a t" style="left:3.01px;top:8.75px;font-size:34.55px;line-height:34.55px">299366776</div></div>
<div class="a" style="left:1658.0px;top:1305.10px;width:212.5px;height:54.10px;overflow:hidden"><div class="a t" style="left:0;width:212.5px;top:8.75px;font-size:34.55px;line-height:34.55px;text-align:center">02/10/2022</div></div>
<div class="a" style="left:1873.5px;top:1305.10px;width:195px;height:54.10px;overflow:hidden"><div class="a t" style="left:0;width:195px;top:8.75px;font-size:34.55px;line-height:34.55px;text-align:center">02/10/2022</div></div>
<div class="a" style="left:2071.5px;top:1305.10px;width:195px;height:54.10px;overflow:hidden"><div class="a t" style="left:0;width:195px;top:8.75px;font-size:34.55px;line-height:34.55px;text-align:center">02/10/2022</div></div>
<div class="a" style="left:2269.5px;top:1305.10px;width:213.5px;height:54.10px;overflow:hidden"><div class="a t" style="left:2.31px;top:8.75px;font-size:34.55px;line-height:34.55px">IT22-68211I-2022</div></div>
<div class="a" style="left:2486.0px;top:1305.10px;width:212.5px;height:54.10px;overflow:hidden"><div class="a t" style="right:4.65px;top:8.75px;font-size:34.55px;line-height:34.55px;text-align:right">83,40</div></div>
<div class="a" style="left:2989.5px;top:1305.10px;width:285px;height:54.10px;overflow:hidden"><div class="a t" style="left:4.93px;top:8.75px;font-size:34.55px;line-height:34.55px">AUTO INVIATA</div></div>
<div class="a" style="left:3277.5px;top:1305.10px;width:105px;height:54.10px;overflow:hidden"><div class="a t" style="left:4.22px;top:8.75px;font-size:34.55px;line-height:34.55px">TD01</div></div>
<svg class="a" style="left:3394px;top:1316.1px;" width="30" height="30" viewBox="0 0 30 30"><g fill="none" stroke="#555" stroke-width="2.2"><path d="M5.5 4.5 L2 4.5 L2 27.5 L24.5 27.5 L24.5 24.5"/><rect x="5.5" y="1.2" width="23" height="23" rx="1.5"/></g><polyline points="10,12 14.5,18 23.5,6" fill="none" stroke="#505050" stroke-width="3.4" stroke-linejoin="miter"/></svg>
<svg class="a" style="left:3457px;top:1316.1px;" width="30" height="30" viewBox="0 0 30 30"><g fill="none" stroke="#555" stroke-width="2.2"><path d="M5.5 4.5 L2 4.5 L2 27.5 L24.5 27.5 L24.5 24.5"/><rect x="5.5" y="1.2" width="23" height="23" rx="1.5"/></g><polyline points="10,12 14.5,18 23.5,6" fill="none" stroke="#505050" stroke-width="3.4" stroke-linejoin="miter"/></svg>
<div class="a" style="left:125px;top:1357.2px;width:3380px;height:56.09999999999991px;background:#f5f5f5"></div>
<svg class="a" style="left:205px;top:1370.7px;" width="30" height="30" viewBox="0 0 30 30"><g fill="none" stroke="#555" stroke-width="2.2"><path d="M5.5 4.5 L2 4.5 L2 27.5 L24.5 27.5 L24.5 24.5"/><rect x="5.5" y="1.2" width="23" height="23" rx="1.5"/></g></svg>
<svg class="a" style="left:291px;top:1373.2px;" width="26" height="26" viewBox="0 0 26 26"><circle cx="13" cy="13" r="10.3" fill="#b8223f"/></svg>
<div class="a" style="left:344.0px;top:1359.20px;width:302.5px;height:54.10px;overflow:hidden"><div class="a t" style="left:3.17px;top:8.75px;font-size:34.55px;line-height:34.55px">Fattura incompleta</div></div>
<div class="a" style="left:937.5px;top:1359.20px;width:393px;height:54.10px;overflow:hidden"><div class="a t" style="left:3.43px;top:8.75px;font-size:34.55px;line-height:34.55px">SAS KORTO CONSULTING</div></div>
<div class="a" style="left:1333.5px;top:1359.20px;width:51.5px;height:54.10px;overflow:hidden"><div class="a t" style="left:2.17px;top:8.75px;font-size:34.55px;line-height:34.55px">FR</div></div>
<div class="a" style="left:1388.0px;top:1359.20px;width:267.0px;height:54.10px;overflow:hidden"><div class="a t" style="left:3.00px;top:8.75px;font-size:34.55px;line-height:34.55px">67830595757</div></div>
<div class="a" style="left:1658.0px;top:1359.20px;width:212.5px;height:54.10px;overflow:hidden"><div class="a t" style="left:0;width:212.5px;top:8.75px;font-size:34.55px;line-height:34.55px;text-align:center">02/10/2022</div></div>
<div class="a" style="left:1873.5px;top:1359.20px;width:195px;height:54.10px;overflow:hidden"><div class="a t" style="left:0;width:195px;top:8.75px;font-size:34.55px;line-height:34.55px;text-align:center">02/10/2022</div></div>
<div class="a" style="left:2071.5px;top:1359.20px;width:195px;height:54.10px;overflow:hidden"><div class="a t" style="left:0;width:195px;top:8.75px;font-size:34.55px;line-height:34.55px;text-align:center">02/10/2022</div></div>
<div class="a" style="left:2269.5px;top:1359.20px;width:213.5px;height:54.10px;overflow:hidden"><div class="a t" style="left:2.31px;top:8.75px;font-size:34.55px;line-height:34.55px">IT22-68211I-2022</div></div>
<div class="a" style="left:2486.0px;top:1359.20px;width:212.5px;height:54.10px;overflow:hidden"><div class="a t" style="right:4.26px;top:8.75px;font-size:34.55px;line-height:34.55px;text-align:right">8,32</div></div>
<div class="a" style="left:2989.5px;top:1359.20px;width:285px;height:54.10px;overflow:hidden"><div class="a t" style="left:4.93px;top:8.75px;font-size:34.55px;line-height:34.55px">AUTO INVIATA</div></div>
<div class="a" style="left:3277.5px;top:1359.20px;width:105px;height:54.10px;overflow:hidden"><div class="a t" style="left:4.22px;top:8.75px;font-size:34.55px;line-height:34.55px">TD01</div></div>
<svg class="a" style="left:3394px;top:1370.2px;" width="30" height="30" viewBox="0 0 30 30"><g fill="none" stroke="#555" stroke-width="2.2"><path d="M5.5 4.5 L2 4.5 L2 27.5 L24.5 27.5 L24.5 24.5"/><rect x="5.5" y="1.2" width="23" height="23" rx="1.5"/></g><polyline points="10,12 14.5,18 23.5,6" fill="none" stroke="#505050" stroke-width="3.4" stroke-linejoin="miter"/></svg>
<svg class="a" style="left:3457px;top:1370.2px;" width="30" height="30" viewBox="0 0 30 30"><g fill="none" stroke="#555" stroke-width="2.2"><path d="M5.5 4.5 L2 4.5 L2 27.5 L24.5 27.5 L24.5 24.5"/><rect x="5.5" y="1.2" width="23" height="23" rx="1.5"/></g><polyline points="10,12 14.5,18 23.5,6" fill="none" stroke="#505050" stroke-width="3.4" stroke-linejoin="miter"/></svg>
<div class="a" style="left:178.5px;top:1411.3000000000002px;width:3.0px;height:56.09999999999991px;background:#f7f7f7"></div>
<div class="a" style="left:268.5px;top:1411.3000000000002px;width:3.0px;height:56.09999999999991px;background:#f7f7f7"></div>
<div class="a" style="left:341.0px;top:1411.3000000000002px;width:3.0px;height:56.09999999999991px;background:#f7f7f7"></div>
<div class="a" style="left:646.5px;top:1411.3000000000002px;width:3.0px;height:56.09999999999991px;background:#f7f7f7"></div>
<div class="a" style="left:808.5px;top:1411.3000000000002px;width:3.0px;height:56.09999999999991px;background:#f7f7f7"></div>
<div class="a" style="left:934.5px;top:1411.3000000000002px;width:3.0px;height:56.09999999999991px;background:#f7f7f7"></div>
<div class="a" style="left:1330.5px;top:1411.3000000000002px;width:3.0px;height:56.09999999999991px;background:#f7f7f7"></div>
<div class="a" style="left:1385.0px;top:1411.3000000000002px;width:3.0px;height:56.09999999999991px;background:#f7f7f7"></div>
<div class="a" style="left:1655.0px;top:1411.3000000000002px;width:3.0px;height:56.09999999999991px;background:#f7f7f7"></div>
<div class="a" style="left:1870.5px;top:1411.3000000000002px;width:3.0px;height:56.09999999999991px;background:#f7f7f7"></div>
<div class="a" style="left:2068.5px;top:1411.3000000000002px;width:3.0px;height:56.09999999999991px;background:#f7f7f7"></div>
<div class="a" style="left:2266.5px;top:1411.3000000000002px;width:3.0px;height:56.09999999999991px;background:#f7f7f7"></div>
<div class="a" style="left:2483.0px;top:1411.3000000000002px;width:3.0px;height:56.09999999999991px;background:#f7f7f7"></div>
<div class="a" style="left:2698.5px;top:1411.3000000000002px;width:3.0px;height:56.09999999999991px;background:#f7f7f7"></div>
<div class="a" style="left:2789.0px;top:1411.3000000000002px;width:3.0px;height:56.09999999999991px;background:#f7f7f7"></div>
<div class="a" style="left:2986.5px;top:1411.3000000000002px;width:3.0px;height:56.09999999999991px;background:#f7f7f7"></div>
<div class="a" style="left:3274.5px;top:1411.3000000000002px;width:3.0px;height:56.09999999999991px;background:#f7f7f7"></div>
<div class="a" style="left:3382.5px;top:1411.3000000000002px;width:3.0px;height:56.09999999999991px;background:#f7f7f7"></div>
<div class="a" style="left:3437.5px;top:1411.3000000000002px;width:3.0px;height:56.09999999999991px;background:#f7f7f7"></div>
<svg class="a" style="left:205px;top:1424.8px;" width="30" height="30" viewBox="0 0 30 30"><g fill="none" stroke="#555" stroke-width="2.2"><path d="M5.5 4.5 L2 4.5 L2 27.5 L24.5 27.5 L24.5 24.5"/><rect x="5.5" y="1.2" width="23" height="23" rx="1.5"/></g></svg>
<svg class="a" style="left:291px;top:1427.3px;" width="26" height="26" viewBox="0 0 26 26"><circle cx="13" cy="13" r="10.3" fill="#b8223f"/></svg>
<div class="a" style="left:344.0px;top:1413.30px;width:302.5px;height:54.10px;overflow:hidden"><div class="a t" style="left:3.17px;top:8.75px;font-size:34.55px;line-height:34.55px">Fattura incompleta</div></div>
<div class="a" style="left:937.5px;top:1413.30px;width:393px;height:54.10px;overflow:hidden"><div class="a t" style="left:2.17px;top:8.75px;font-size:34.55px;line-height:34.55px">BS Partners</div></div>
<div class="a" style="left:1333.5px;top:1413.30px;width:51.5px;height:54.10px;overflow:hidden"><div class="a t" style="left:2.17px;top:8.75px;font-size:34.55px;line-height:34.55px">FR</div></div>
<div class="a" style="left:1388.0px;top:1413.30px;width:267.0px;height:54.10px;overflow:hidden"><div class="a t" style="left:2.98px;top:8.75px;font-size:34.55px;line-height:34.55px">78843905357</div></div>
<div class="a" style="left:1658.0px;top:1413.30px;width:212.5px;height:54.10px;overflow:hidden"><div class="a t" style="left:0;width:212.5px;top:8.75px;font-size:34.55px;line-height:34.55px;text-align:center">03/10/2022</div></div>
<div class="a" style="left:1873.5px;top:1413.30px;width:195px;height:54.10px;overflow:hidden"><div class="a t" style="left:0;width:195px;top:8.75px;font-size:34.55px;line-height:34.55px;text-align:center">03/10/2022</div></div>
<div class="a" style="left:2071.5px;top:1413.30px;width:195px;height:54.10px;overflow:hidden"><div class="a t" style="left:0;width:195px;top:8.75px;font-size:34.55px;line-height:34.55px;text-align:center">03/10/2022</div></div>
<div class="a" style="left:2269.5px;top:1413.30px;width:213.5px;height:54.10px;overflow:hidden"><div class="a t" style="left:2.31px;top:8.75px;font-size:34.55px;line-height:34.55px">IT22-68211I-2022</div></div>
<div class="a" style="left:2486.0px;top:1413.30px;width:212.5px;height:54.10px;overflow:hidden"><div class="a t" style="right:4.99px;top:8.75px;font-size:34.55px;line-height:34.55px;text-align:right">12,24</div></div>
<div class="a" style="left:2989.5px;top:1413.30px;width:285px;height:54.10px;overflow:hidden"><div class="a t" style="left:4.93px;top:8.75px;font-size:34.55px;line-height:34.55px">AUTO INVIATA</div></div>
<div class="a" style="left:3277.5px;top:1413.30px;width:105px;height:54.10px;overflow:hidden"><div class="a t" style="left:4.22px;top:8.75px;font-size:34.55px;line-height:34.55px">TD01</div></div>
<svg class="a" style="left:3394px;top:1424.3px;" width="30" height="30" viewBox="0 0 30 30"><g fill="none" stroke="#555" stroke-width="2.2"><path d="M5.5 4.5 L2 4.5 L2 27.5 L24.5 27.5 L24.5 24.5"/><rect x="5.5" y="1.2" width="23" height="23" rx="1.5"/></g><polyline points="10,12 14.5,18 23.5,6" fill="none" stroke="#505050" stroke-width="3.4" stroke-linejoin="miter"/></svg>
<svg class="a" style="left:3457px;top:1424.3px;" width="30" height="30" viewBox="0 0 30 30"><g fill="none" stroke="#555" stroke-width="2.2"><path d="M5.5 4.5 L2 4.5 L2 27.5 L24.5 27.5 L24.5 24.5"/><rect x="5.5" y="1.2" width="23" height="23" rx="1.5"/></g><polyline points="10,12 14.5,18 23.5,6" fill="none" stroke="#505050" stroke-width="3.4" stroke-linejoin="miter"/></svg>
<div class="a" style="left:125px;top:1465.4px;width:3380px;height:56.09999999999991px;background:#f5f5f5"></div>
<svg class="a" style="left:205px;top:1478.9px;" width="30" height="30" viewBox="0 0 30 30"><g fill="none" stroke="#555" stroke-width="2.2"><path d="M5.5 4.5 L2 4.5 L2 27.5 L24.5 27.5 L24.5 24.5"/><rect x="5.5" y="1.2" width="23" height="23" rx="1.5"/></g></svg>
<svg class="a" style="left:291px;top:1481.4px;" width="26" height="26" viewBox="0 0 26 26"><circle cx="13" cy="13" r="10.3" fill="#b8223f"/></svg>
<div class="a" style="left:344.0px;top:1467.40px;width:302.5px;height:54.10px;overflow:hidden"><div class="a t" style="left:3.17px;top:8.75px;font-size:34.55px;line-height:34.55px">Fattura incompleta</div></div>
<div class="a" style="left:937.5px;top:1467.40px;width:393px;height:54.10px;overflow:hidden"><div class="a t" style="left:1.81px;top:8.75px;font-size:34.55px;line-height:34.55px">ITC COMUNICACIONES</div></div>
<div class="a" style="left:1333.5px;top:1467.40px;width:51.5px;height:54.10px;overflow:hidden"><div class="a t" style="left:2.17px;top:8.75px;font-size:34.55px;line-height:34.55px">ES</div></div>
<div class="a" style="left:1388.0px;top:1467.40px;width:267.0px;height:54.10px;overflow:hidden"><div class="a t" style="left:1.92px;top:8.75px;font-size:34.55px;line-height:34.55px">B11908456</div></div>
<div class="a" style="left:1658.0px;top:1467.40px;width:212.5px;height:54.10px;overflow:hidden"><div class="a t" style="left:0;width:212.5px;top:8.75px;font-size:34.55px;line-height:34.55px;text-align:center">03/10/2022</div></div>
<div class="a" style="left:1873.5px;top:1467.40px;width:195px;height:54.10px;overflow:hidden"><div class="a t" style="left:0;width:195px;top:8.75px;font-size:34.55px;line-height:34.55px;text-align:center">03/10/2022</div></div>
<div class="a" style="left:2071.5px;top:1467.40px;width:195px;height:54.10px;overflow:hidden"><div class="a t" style="left:0;width:195px;top:8.75px;font-size:34.55px;line-height:34.55px;text-align:center">03/10/2022</div></div>
<div class="a" style="left:2269.5px;top:1467.40px;width:213.5px;height:54.10px;overflow:hidden"><div class="a t" style="left:2.31px;top:8.75px;font-size:34.55px;line-height:34.55px">IT22-68211I-2022</div></div>
<div class="a" style="left:2486.0px;top:1467.40px;width:212.5px;height:54.10px;overflow:hidden"><div class="a t" style="right:4.50px;top:8.75px;font-size:34.55px;line-height:34.55px;text-align:right">22,18</div></div>
<div class="a" style="left:2989.5px;top:1467.40px;width:285px;height:54.10px;overflow:hidden"><div class="a t" style="left:4.93px;top:8.75px;font-size:34.55px;line-height:34.55px">AUTO INVIATA</div></div>
<div class="a" style="left:3277.5px;top:1467.40px;width:105px;height:54.10px;overflow:hidden"><div class="a t" style="left:4.22px;top:8.75px;font-size:34.55px;line-height:34.55px">TD01</div></div>
<svg class="a" style="left:3394px;top:1478.4px;" width="30" height="30" viewBox="0 0 30 30"><g fill="none" stroke="#555" stroke-width="2.2"><path d="M5.5 4.5 L2 4.5 L2 27.5 L24.5 27.5 L24.5 24.5"/><rect x="5.5" y="1.2" width="23" height="23" rx="1.5"/></g><polyline points="10,12 14.5,18 23.5,6" fill="none" stroke="#505050" stroke-width="3.4" stroke-linejoin="miter"/></svg>
<svg class="a" style="left:3457px;top:1478.4px;" width="30" height="30" viewBox="0 0 30 30"><g fill="none" stroke="#555" stroke-width="2.2"><path d="M5.5 4.5 L2 4.5 L2 27.5 L24.5 27.5 L24.5 24.5"/><rect x="5.5" y="1.2" width="23" height="23" rx="1.5"/></g><polyline points="10,12 14.5,18 23.5,6" fill="none" stroke="#505050" stroke-width="3.4" stroke-linejoin="miter"/></svg>
<div class="a" style="left:178.5px;top:1519.5px;width:3.0px;height:56.09999999999991px;background:#f7f7f7"></div>
<div class="a" style="left:268.5px;top:1519.5px;width:3.0px;height:56.09999999999991px;background:#f7f7f7"></div>
<div class="a" style="left:341.0px;top:1519.5px;width:3.0px;height:56.09999999999991px;background:#f7f7f7"></div>
<div class="a" style="left:646.5px;top:1519.5px;width:3.0px;height:56.09999999999991px;background:#f7f7f7"></div>
<div class="a" style="left:808.5px;top:1519.5px;width:3.0px;height:56.09999999999991px;background:#f7f7f7"></div>
<div class="a" style="left:934.5px;top:1519.5px;width:3.0px;height:56.09999999999991px;background:#f7f7f7"></div>
<div class="a" style="left:1330.5px;top:1519.5px;width:3.0px;height:56.09999999999991px;background:#f7f7f7"></div>
<div class="a" style="left:1385.0px;top:1519.5px;width:3.0px;height:56.09999999999991px;background:#f7f7f7"></div>
<div class="a" style="left:1655.0px;top:1519.5px;width:3.0px;height:56.09999999999991px;background:#f7f7f7"></div>
<div class="a" style="left:1870.5px;top:1519.5px;width:3.0px;height:56.09999999999991px;background:#f7f7f7"></div>
<div class="a" style="left:2068.5px;top:1519.5px;width:3.0px;height:56.09999999999991px;background:#f7f7f7"></div>
<div class="a" style="left:2266.5px;top:1519.5px;width:3.0px;height:56.09999999999991px;background:#f7f7f7"></div>
<div class="a" style="left:2483.0px;top:1519.5px;width:3.0px;height:56.09999999999991px;background:#f7f7f7"></div>
<div class="a" style="left:2698.5px;top:1519.5px;width:3.0px;height:56.09999999999991px;background:#f7f7f7"></div>
<div class="a" style="left:2789.0px;top:1519.5px;width:3.0px;height:56.09999999999991px;background:#f7f7f7"></div>
<div class="a" style="left:2986.5px;top:1519.5px;width:3.0px;height:56.09999999999991px;background:#f7f7f7"></div>
<div class="a" style="left:3274.5px;top:1519.5px;width:3.0px;height:56.09999999999991px;background:#f7f7f7"></div>
<div class="a" style="left:3382.5px;top:1519.5px;width:3.0px;height:56.09999999999991px;background:#f7f7f7"></div>
<div class="a" style="left:3437.5px;top:1519.5px;width:3.0px;height:56.09999999999991px;background:#f7f7f7"></div>
<svg class="a" style="left:205px;top:1533.0px;" width="30" height="30" viewBox="0 0 30 30"><g fill="none" stroke="#555" stroke-width="2.2"><path d="M5.5 4.5 L2 4.5 L2 27.5 L24.5 27.5 L24.5 24.5"/><rect x="5.5" y="1.2" width="23" height="23" rx="1.5"/></g></svg>
<svg class="a" style="left:291px;top:1535.5px;" width="26" height="26" viewBox="0 0 26 26"><circle cx="13" cy="13" r="10.3" fill="#b8223f"/></svg>
<div class="a" style="left:344.0px;top:1521.50px;width:302.5px;height:54.10px;overflow:hidden"><div class="a t" style="left:3.17px;top:8.75px;font-size:34.55px;line-height:34.55px">Fattura incompleta</div></div>
<div class="a" style="left:937.5px;top:1521.50px;width:393px;height:54.10px;overflow:hidden"><div class="a t" style="left:3.25px;top:8.75px;font-size:34.55px;line-height:34.55px">Claudia Kohlhuber</div></div>
<div class="a" style="left:1333.5px;top:1521.50px;width:51.5px;height:54.10px;overflow:hidden"><div class="a t" style="left:3.25px;top:8.75px;font-size:34.55px;line-height:34.55px">CH</div></div>
<div class="a" style="left:1388.0px;top:1521.50px;width:267.0px;height:54.10px;overflow:hidden"><div class="a t" style="left:3.40px;top:8.75px;font-size:34.55px;line-height:34.55px">0000000</div></div>
<div class="a" style="left:1658.0px;top:1521.50px;width:212.5px;height:54.10px;overflow:hidden"><div class="a t" style="left:0;width:212.5px;top:8.75px;font-size:34.55px;line-height:34.55px;text-align:center">03/10/2022</div></div>
<div class="a" style="left:1873.5px;top:1521.50px;width:195px;height:54.10px;overflow:hidden"><div class="a t" style="left:0;width:195px;top:8.75px;font-size:34.55px;line-height:34.55px;text-align:center">03/10/2022</div></div>
<div class="a" style="left:2071.5px;top:1521.50px;width:195px;height:54.10px;overflow:hidden"><div class="a t" style="left:0;width:195px;top:8.75px;font-size:34.55px;line-height:34.55px;text-align:center">03/10/2022</div></div>
<div class="a" style="left:2269.5px;top:1521.50px;width:213.5px;height:54.10px;overflow:hidden"><div class="a t" style="left:2.31px;top:8.75px;font-size:34.55px;line-height:34.55px">IT22-68211I-2022</div></div>
<div class="a" style="left:2486.0px;top:1521.50px;width:212.5px;height:54.10px;overflow:hidden"><div class="a t" style="right:4.26px;top:8.75px;font-size:34.55px;line-height:34.55px;text-align:right">37,62</div></div>
<div class="a" style="left:2989.5px;top:1521.50px;width:285px;height:54.10px;overflow:hidden"><div class="a t" style="left:4.93px;top:8.75px;font-size:34.55px;line-height:34.55px">AUTO INVIATA</div></div>
<div class="a" style="left:3277.5px;top:1521.50px;width:105px;height:54.10px;overflow:hidden"><div class="a t" style="left:4.22px;top:8.75px;font-size:34.55px;line-height:34.55px">TD01</div></div>
<svg class="a" style="left:3394px;top:1532.5px;" width="30" height="30" viewBox="0 0 30 30"><g fill="none" stroke="#555" stroke-width="2.2"><path d="M5.5 4.5 L2 4.5 L2 27.5 L24.5 27.5 L24.5 24.5"/><rect x="5.5" y="1.2" width="23" height="23" rx="1.5"/></g><polyline points="10,12 14.5,18 23.5,6" fill="none" stroke="#505050" stroke-width="3.4" stroke-linejoin="miter"/></svg>
<svg class="a" style="left:3457px;top:1532.5px;" width="30" height="30" viewBox="0 0 30 30"><g fill="none" stroke="#555" stroke-width="2.2"><path d="M5.5 4.5 L2 4.5 L2 27.5 L24.5 27.5 L24.5 24.5"/><rect x="5.5" y="1.2" width="23" height="23" rx="1.5"/></g><polyline points="10,12 14.5,18 23.5,6" fill="none" stroke="#505050" stroke-width="3.4" stroke-linejoin="miter"/></svg>
</div>
<div class="a" style="left:123.5px;top:654px;width:1.5px;height:917px;background:#a8a8a8"></div>
<div class="a" style="left:3537.5px;top:654px;width:2.0px;height:917px;background:#a8a8a8"></div>
<div class="a" style="left:123.5px;top:1569px;width:3416.0px;height:2px;background:#a8a8a8"></div>
<div class="a" style="left:3505px;top:654px;width:34px;height:1px;background:#a8a8a8"></div>
<div class="a" style="left:3506px;top:656px;width:31px;height:912px;background:#efefef;border-radius:3px"></div>
<div class="a" style="left:3506px;top:884px;width:31px;height:1px;background:#e0e0e0"></div>
<div class="a" style="left:3506px;top:1112px;width:31px;height:1px;background:#e0e0e0"></div>
<div class="a" style="left:3506px;top:1340px;width:31px;height:1px;background:#e0e0e0"></div>
<svg class="a" style="left:3514px;top:765px;" width="16" height="11" viewBox="0 0 16 11"><path d="M8 1 L15 10 L1 10 Z" fill="#8c8c8c" stroke="#8c8c8c" stroke-width="1" stroke-linejoin="round"/></svg>
<svg class="a" style="left:3515px;top:987px;" width="16" height="22" viewBox="0 0 16 22"><g fill="#8c8c8c" stroke="#8c8c8c" stroke-width="1" stroke-linejoin="round"><path d="M8 1 L15 9 L1 9 Z"/><path d="M8 11 L15 19 L1 19 Z"/></g></svg>
<svg class="a" style="left:3515px;top:1216px;" width="16" height="22" viewBox="0 0 16 22"><g fill="#8c8c8c" stroke="#8c8c8c" stroke-width="1" stroke-linejoin="round"><path d="M1 3 L15 3 L8 11 Z"/><path d="M1 13 L15 13 L8 21 Z"/></g></svg>
<svg class="a" style="left:3514px;top:1451px;" width="16" height="11" viewBox="0 0 16 11"><path d="M1 1 L15 1 L8 10 Z" fill="#8c8c8c" stroke="#8c8c8c" stroke-width="1" stroke-linejoin="round"/></svg>
<div class="a" style="left:3564px;top:656px;width:260px;height:106px;background:#64a5f6;border-radius:4px;box-shadow:0 0 0 1px rgba(255,255,255,0.9),0 2.5px 1.5px rgba(0,0,0,0.32);"></div>
<div class="a t" style="left:3394.00px;width:600px;top:690.34px;font-size:37.4px;line-height:37.4px;text-align:center;color:#fff;">Seleziona tutto</div>
<div class="a" style="left:3564px;top:766px;width:260px;height:106px;background:#64a5f6;border-radius:4px;box-shadow:0 0 0 1px rgba(255,255,255,0.9),0 2.5px 1.5px rgba(0,0,0,0.32);"></div>
<div class="a t" style="left:3394.00px;width:600px;top:778.84px;font-size:37.4px;line-height:37.4px;text-align:center;color:#fff;">Dettaglio</div>
<div class="a t" style="left:3394.00px;width:600px;top:820.84px;font-size:37.4px;line-height:37.4px;text-align:center;color:#fff;">fattura</div>
<div class="a" style="left:3564px;top:876px;width:260px;height:106px;background:#64a5f6;border-radius:4px;box-shadow:0 0 0 1px rgba(255,255,255,0.9),0 2.5px 1.5px rgba(0,0,0,0.32);"></div>
<div class="a t" style="left:3394.00px;width:600px;top:888.84px;font-size:37.4px;line-height:37.4px;text-align:center;color:#fff;">Stati della</div>
<div class="a t" style="left:3394.00px;width:600px;top:930.84px;font-size:37.4px;line-height:37.4px;text-align:center;color:#fff;">fattura</div>
<div class="a" style="left:3564px;top:986px;width:260px;height:106px;background:#c3c3c3;border-radius:4px;box-shadow:0 0 0 1px rgba(255,255,255,0.9);"></div>
<div class="a t" style="left:3394.00px;width:600px;top:998.84px;font-size:37.4px;line-height:37.4px;text-align:center;color:#fafafa;">Variazione</div>
<div class="a t" style="left:3394.00px;width:600px;top:1040.84px;font-size:37.4px;line-height:37.4px;text-align:center;color:#fafafa;">prima nota</div>
<div class="a" style="left:3564px;top:1096px;width:260px;height:106px;background:#64a5f6;border-radius:4px;box-shadow:0 0 0 1px rgba(255,255,255,0.9),0 2.5px 1.5px rgba(0,0,0,0.32);"></div>
<div class="a t" style="left:3394.00px;width:600px;top:1108.84px;font-size:37.4px;line-height:37.4px;text-align:center;color:#fff;">Inizio</div>
<div class="a t" style="left:3394.00px;width:600px;top:1150.84px;font-size:37.4px;line-height:37.4px;text-align:center;color:#fff;">Anteprima</div>
<div class="a" style="left:3564px;top:1206px;width:260px;height:106px;background:#64a5f6;border-radius:4px;box-shadow:0 0 0 1px rgba(255,255,255,0.9),0 2.5px 1.5px rgba(0,0,0,0.32);"></div>
<div class="a t" style="left:3394.00px;width:600px;top:1218.84px;font-size:37.4px;line-height:37.4px;text-align:center;color:#fff;">Contabilizza</div>
<div class="a t" style="left:3394.00px;width:600px;top:1260.84px;font-size:37.4px;line-height:37.4px;text-align:center;color:#fff;">dati</div>
<div class="a" style="left:3564px;top:1316px;width:260px;height:106px;background:#64a5f6;border-radius:4px;box-shadow:0 0 0 1px rgba(255,255,255,0.9),0 2.5px 1.5px rgba(0,0,0,0.32);"></div>
<div class="a t" style="left:3394.00px;width:600px;top:1350.34px;font-size:37.4px;line-height:37.4px;text-align:center;color:#fff;">Prelievo</div>
<div class="a" style="left:3564px;top:1426px;width:260px;height:106px;background:#64a5f6;border-radius:4px;box-shadow:0 0 0 1px rgba(255,255,255,0.9),0 2.5px 1.5px rgba(0,0,0,0.32);"></div>
<div class="a t" style="left:3394.00px;width:600px;top:1438.84px;font-size:37.4px;line-height:37.4px;text-align:center;color:#fff;">Inserimento</div>
<div class="a t" style="left:3394.00px;width:600px;top:1480.84px;font-size:37.4px;line-height:37.4px;text-align:center;color:#fff;">prima nota</div>
<div class="a" style="left:3564px;top:1536px;width:260px;height:106px;background:#64a5f6;border-radius:4px;box-shadow:0 0 0 1px rgba(255,255,255,0.9),0 2.5px 1.5px rgba(0,0,0,0.32);"></div>
<div class="a t" style="left:3394.00px;width:600px;top:1548.84px;font-size:37.4px;line-height:37.4px;text-align:center;color:#fff;">Assegna</div>
<div class="a t" style="left:3394.00px;width:600px;top:1590.84px;font-size:37.4px;line-height:37.4px;text-align:center;color:#fff;">quater/sez.</div>
<div class="a" style="left:80px;top:1674px;width:3760px;height:2px;background:#5a5a5a;opacity:0.85"></div>
<div class="a" style="left:94px;top:1690px;width:260px;height:106px;background:#64a5f6;border-radius:4px;box-shadow:0 0 0 1px rgba(255,255,255,0.9),0 2.5px 1.5px rgba(0,0,0,0.32);"></div>
<div class="a t" style="left:-76.00px;width:600px;top:1723.34px;font-size:37.4px;line-height:37.4px;text-align:center;color:#fff;">Gestione viste</div>
<div class="a" style="left:358px;top:1690px;width:260px;height:106px;background:#64a5f6;border-radius:4px;box-shadow:0 0 0 1px rgba(255,255,255,0.9),0 2.5px 1.5px rgba(0,0,0,0.32);"></div>
<div class="a t" style="left:188.00px;width:600px;top:1723.34px;font-size:37.4px;line-height:37.4px;text-align:center;color:#fff;">Stampa griglia</div>
<div class="a" style="left:622px;top:1690px;width:260px;height:106px;background:#64a5f6;border-radius:4px;box-shadow:0 0 0 1px rgba(255,255,255,0.9),0 2.5px 1.5px rgba(0,0,0,0.32);"></div>
<div class="a t" style="left:452.00px;width:600px;top:1723.34px;font-size:37.4px;line-height:37.4px;text-align:center;color:#fff;">Export griglia</div>
<div class="a" style="left:886px;top:1690px;width:260px;height:106px;background:#c3c3c3;border-radius:4px;box-shadow:0 0 0 1px rgba(255,255,255,0.9);"></div>
<div class="a t" style="left:716.00px;width:600px;top:1702.34px;font-size:37.4px;line-height:37.4px;text-align:center;color:#fafafa;">Variazione</div>
<div class="a t" style="left:716.00px;width:600px;top:1743.84px;font-size:37.4px;line-height:37.4px;text-align:center;color:#fafafa;">documento</div>
<div class="a" style="left:1150px;top:1690px;width:260px;height:106px;background:#c3c3c3;border-radius:4px;box-shadow:0 0 0 1px rgba(255,255,255,0.9);"></div>
<div class="a t" style="left:980.00px;width:600px;top:1702.34px;font-size:37.4px;line-height:37.4px;text-align:center;color:#fafafa;">Stampa</div>
<div class="a t" style="left:980.00px;width:600px;top:1743.84px;font-size:37.4px;line-height:37.4px;text-align:center;color:#fafafa;">documento</div>
<div class="a" style="left:1414px;top:1690px;width:260px;height:106px;background:#64a5f6;border-radius:4px;box-shadow:0 0 0 1px rgba(255,255,255,0.9),0 2.5px 1.5px rgba(0,0,0,0.32);"></div>
<div class="a t" style="left:1244.00px;width:600px;top:1723.34px;font-size:37.4px;line-height:37.4px;text-align:center;color:#fff;">Altre funzioni</div>
<div class="a" style="left:3302px;top:1690px;width:260px;height:106px;background:#64a5f6;border-radius:4px;box-shadow:0 0 0 1px rgba(255,255,255,0.9),0 2.5px 1.5px rgba(0,0,0,0.32);"></div>
<div class="a t" style="left:3132.0px;width:600px;top:1723.84px;font-size:37.4px;line-height:37.4px;text-align:center;color:#fff"><span style="text-decoration:underline;text-decoration-thickness:3px;text-underline-offset:5px">F</span>iltri</div>
<div class="a" style="left:3566px;top:1690px;width:260px;height:106px;background:#64a5f6;border-radius:4px;box-shadow:0 0 0 1px rgba(255,255,255,0.9),0 2.5px 1.5px rgba(0,0,0,0.32);"></div>
<div class="a t" style="left:3396.0px;width:600px;top:1723.84px;font-size:37.4px;line-height:37.4px;text-align:center;color:#fff"><span style="text-decoration:underline;text-decoration-thickness:3px;text-underline-offset:5px">U</span>scita</div>
<div class="a" style="left:80px;top:1807px;width:3760px;height:11px;background:#b5b5b5"></div>
<div class="a" style="left:0px;top:1818px;width:3840px;height:40px;background:#eeeeee"></div>
<div class="a t " style="left:140.30px;top:1826.17px;font-size:25.2px;line-height:25.2px;-webkit-text-stroke:0.8px #000">start: GAMMA versione: 2022.00.07 comando: ECONS - EVAGYOFTGR - Contabilizzazione fatture attive - Azienda: 113 A2Z WORLD S.R.L.</div>
<div class="a t" style="right:10.13px;top:1824.91px;font-size:25.5px;line-height:25.5px;text-align:right;font-weight:bold;color:#2a2a2a;transform:scaleX(0.955);transform-origin:100% 0">TeamSystem Experience</div>
</body></html>
